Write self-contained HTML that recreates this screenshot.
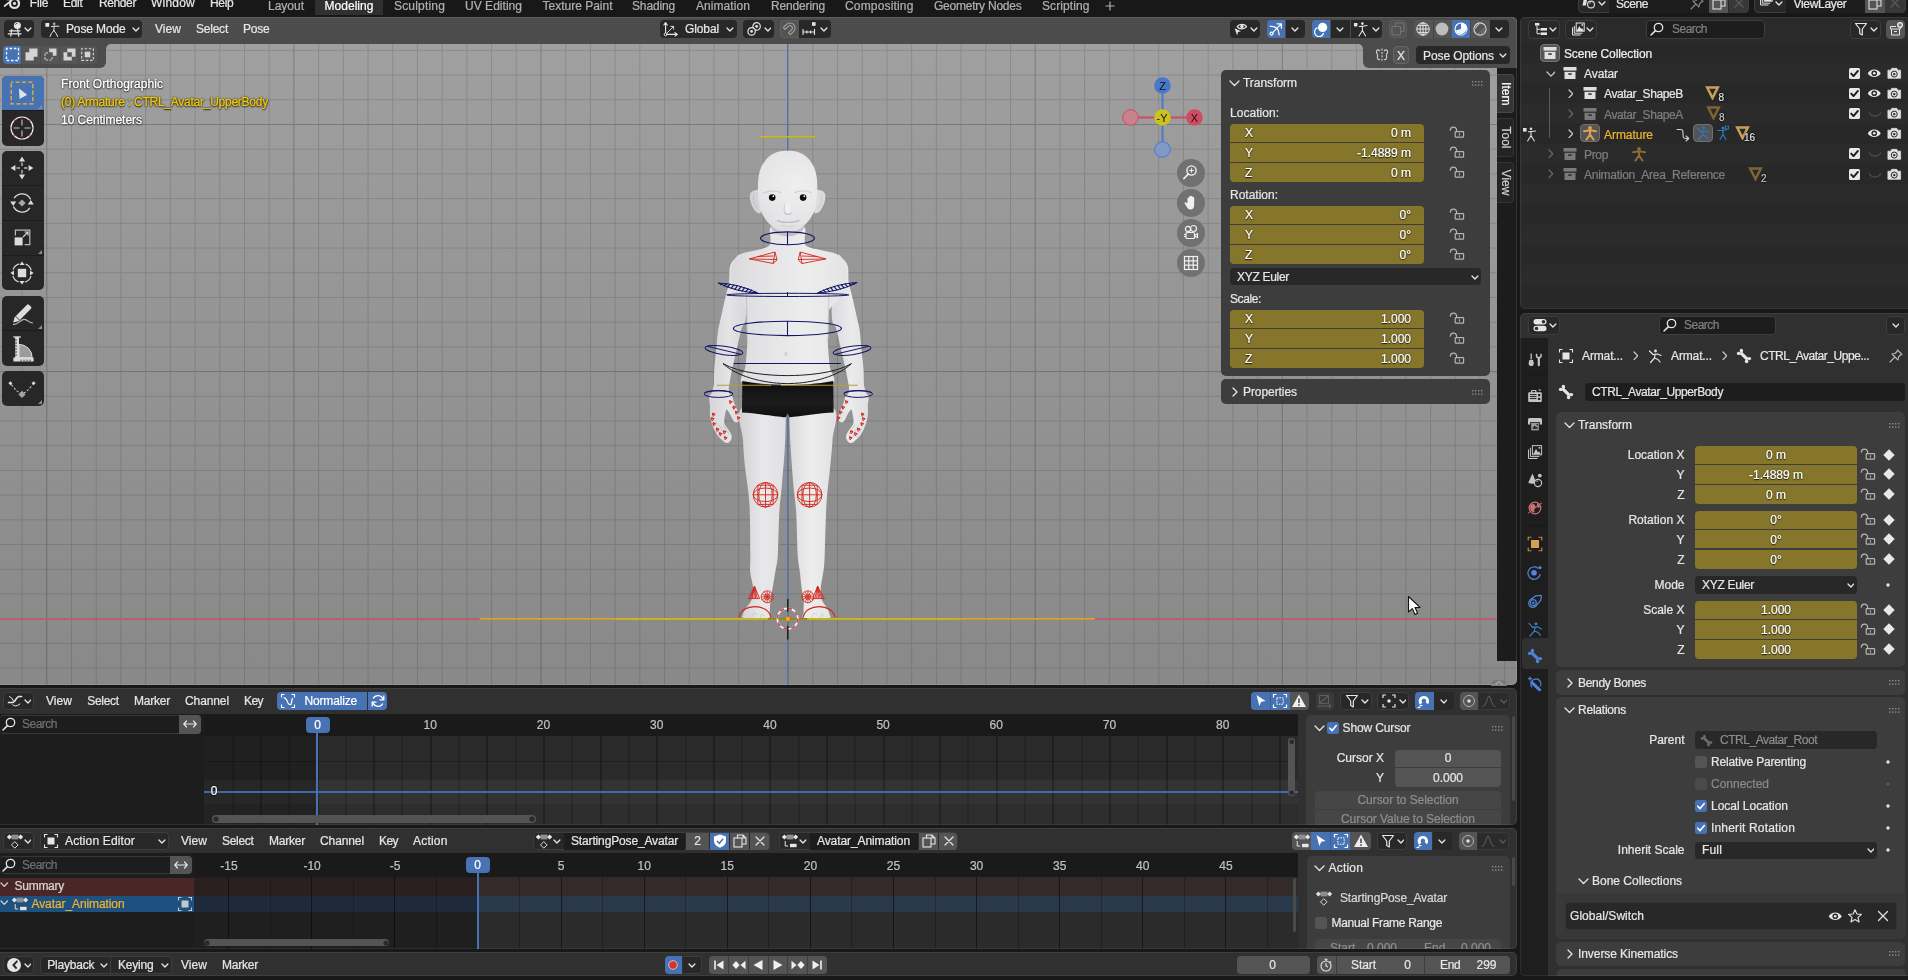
<!DOCTYPE html>
<html><head><meta charset="utf-8"><title>Blender</title>
<style>
html,body{margin:0;padding:0;background:#181818;}
body{width:1908px;height:980px;overflow:hidden;position:relative;font-family:"Liberation Sans", sans-serif;font-size:12px;color:#e6e6e6;}
#root{position:absolute;left:0;top:0;width:1908px;height:980px;overflow:hidden;will-change:transform;}
#root div,#root span,#root svg{position:absolute;white-space:pre;}
#root span{-webkit-text-stroke:0.22px currentColor;}
#root div{box-sizing:border-box;overflow:hidden;}
</style></head><body><div id="root">
<div style="left:0px;top:0px;width:1908px;height:17px;background:#181818;"></div>
<svg style="left:0px;top:0px;" width="24" height="12" viewBox="0 0 24 12"><circle cx="14.5" cy="3.4" r="4.5" fill="none" stroke="#e0e0e0" stroke-width="2.3"/><circle cx="14.5" cy="3.4" r="1.6" fill="#e0e0e0"/><path d="M4.6 6L10.4 1.4M7 -0.5H12" stroke="#e0e0e0" stroke-width="1.7" stroke-linecap="round"/></svg>
<span style="left:29.80px;top:-4.55px;line-height:16px;font-size:12px;color:#e6e6e6;letter-spacing:-0.211px;">File</span>
<span style="left:63.00px;top:-4.55px;line-height:16px;font-size:12px;color:#e6e6e6;letter-spacing:-0.297px;">Edit</span>
<span style="left:99.00px;top:-4.55px;line-height:16px;font-size:12px;color:#e6e6e6;letter-spacing:-0.393px;">Render</span>
<span style="left:151.00px;top:-4.55px;line-height:16px;font-size:12px;color:#e6e6e6;letter-spacing:0.219px;">Window</span>
<span style="left:210.00px;top:-4.55px;line-height:16px;font-size:12px;color:#e6e6e6;letter-spacing:-0.297px;">Help</span>
<div style="left:315px;top:0px;width:68px;height:14.5px;background:#303030;border-radius:0px 0px 0px 0px;"></div>
<span style="left:268.00px;top:-1.55px;line-height:16px;font-size:12px;color:#b0b0b0;letter-spacing:-0.005px;">Layout</span>
<span style="left:324.50px;top:-1.55px;line-height:16px;font-size:12px;color:#ffffff;letter-spacing:0.037px;">Modeling</span>
<span style="left:394.00px;top:-1.55px;line-height:16px;font-size:12px;color:#b0b0b0;letter-spacing:0.181px;">Sculpting</span>
<span style="left:465.00px;top:-1.55px;line-height:16px;font-size:12px;color:#b0b0b0;letter-spacing:0.030px;">UV Editing</span>
<span style="left:542.50px;top:-1.55px;line-height:16px;font-size:12px;color:#b0b0b0;">Texture Paint</span>
<span style="left:632.00px;top:-1.55px;line-height:16px;font-size:12px;color:#b0b0b0;letter-spacing:-0.150px;">Shading</span>
<span style="left:696.00px;top:-1.55px;line-height:16px;font-size:12px;color:#b0b0b0;letter-spacing:0.069px;">Animation</span>
<span style="left:771.00px;top:-1.55px;line-height:16px;font-size:12px;color:#b0b0b0;letter-spacing:-0.153px;">Rendering</span>
<span style="left:845.00px;top:-1.55px;line-height:16px;font-size:12px;color:#b0b0b0;letter-spacing:0.163px;">Compositing</span>
<span style="left:934.00px;top:-1.55px;line-height:16px;font-size:12px;color:#b0b0b0;letter-spacing:-0.229px;">Geometry Nodes</span>
<span style="left:1042.00px;top:-1.55px;line-height:16px;font-size:12px;color:#b0b0b0;letter-spacing:0.090px;">Scripting</span>
<svg style="left:1105px;top:1px;" width="10" height="10" viewBox="0 0 10 10"><path d="M5 0.5V9.5M0.5 5H9.5" stroke="#b0b0b0" stroke-width="1.2"/></svg>
<div style="left:1577.5px;top:-6px;width:171.3px;height:19px;background:#282828;border-radius:4px;border:1px solid #3d3d3d;"></div>
<div style="left:1608.5px;top:-6px;width:100.3px;height:18.5px;background:#1d1d1d;"></div>
<div style="left:1709.1px;top:-6px;width:19.4px;height:18.5px;background:#545454;"></div>
<div style="left:1729.1px;top:-6px;width:19.2px;height:18.5px;background:#383838;border-radius:0px 3px 3px 0px;"></div>
<svg style="left:1710.8px;top:-5.5px;" width="16" height="16" viewBox="0 0 16 16"><g fill="none" stroke="#e0e0e0" stroke-width="1.1"><rect x="2" y="5" width="8" height="9"/><path d="M5.5 5V2H11L14 5V11H10M11 2V5H14"/></g></svg>
<svg style="left:1730.8px;top:-5.5px;" width="16" height="16" viewBox="0 0 16 16"><path d="M4 4L12 12M12 4L4 12" stroke="#5c5c5c" stroke-width="1.2" stroke-linecap="round"/></svg>
<svg style="left:1598.05px;top:1.475px;" width="7.9" height="5.05" viewBox="0 0 7.9 5.05"><path d="M1 1 L3.95 4.05 L6.9 1" fill="none" stroke="#e6e6e6" stroke-width="1.3" stroke-linecap="round" stroke-linejoin="round"/></svg>
<span style="left:1616.00px;top:-4.05px;line-height:16px;font-size:12px;color:#e6e6e6;letter-spacing:-0.406px;">Scene</span>
<svg style="left:1581px;top:-4.4px;" width="16" height="16" viewBox="0 0 16 16"><path d="M3 2Q4 -1 6.5 1L5 9.5L1.5 9.5Z" fill="#e0e0e0"/><circle cx="10" cy="8.5" r="3.4" fill="none" stroke="#e0e0e0" stroke-width="1.1"/><path d="M8.5 7.2L10 6.6" stroke="#e0e0e0" stroke-width="0.9"/></svg>
<svg style="left:1689px;top:-5.5px;" width="16" height="16" viewBox="0 0 16 16"><path d="M9.5 2L14 6.5L12.5 7L10.5 9L10 12L4 6L7 5.5L9 3.5Z M6.5 9.5L2 14" fill="none" stroke="#8a8a8a" stroke-width="1.1" stroke-linejoin="round" stroke-linecap="round"/></svg>
<div style="left:1754.2px;top:-6px;width:151.4px;height:19px;background:#282828;border-radius:4px;border:1px solid #3d3d3d;"></div>
<div style="left:1785.5px;top:-6px;width:79.5px;height:18.5px;background:#1d1d1d;"></div>
<div style="left:1865.3px;top:-6px;width:19.4px;height:18.5px;background:#545454;"></div>
<div style="left:1885.3px;top:-6px;width:19.8px;height:18.5px;background:#383838;border-radius:0px 3px 3px 0px;"></div>
<svg style="left:1867px;top:-5.5px;" width="16" height="16" viewBox="0 0 16 16"><g fill="none" stroke="#e0e0e0" stroke-width="1.1"><rect x="2" y="5" width="8" height="9"/><path d="M5.5 5V2H11L14 5V11H10M11 2V5H14"/></g></svg>
<svg style="left:1887.3px;top:-5.5px;" width="16" height="16" viewBox="0 0 16 16"><path d="M4 4L12 12M12 4L4 12" stroke="#5c5c5c" stroke-width="1.2" stroke-linecap="round"/></svg>
<svg style="left:1775.05px;top:1.475px;" width="7.9" height="5.05" viewBox="0 0 7.9 5.05"><path d="M1 1 L3.95 4.05 L6.9 1" fill="none" stroke="#e6e6e6" stroke-width="1.3" stroke-linecap="round" stroke-linejoin="round"/></svg>
<span style="left:1793.50px;top:-4.05px;line-height:16px;font-size:12px;color:#e6e6e6;letter-spacing:-0.312px;">ViewLayer</span>
<svg style="left:1758px;top:-4.6px;" width="16" height="16" viewBox="0 0 16 16"><g fill="none" stroke="#e0e0e0" stroke-width="1"><path d="M2.5 2V10H10.5M4.3 0V8.2H12.3"/><rect x="6.2" y="-3" width="8" height="9.2"/></g><path d="M6.6 6L9.4 1L11 4L12 3L13.8 6Z" fill="#e0e0e0"/></svg>
<div style="left:0px;top:17px;width:1517px;height:668px;background:linear-gradient(#a1a1a1,#9a9a9a 25%,#939393 55%,#8c8c8c 85%,#898989);border-radius:0px 5px 5px 0px;"></div>
<svg style="left:0px;top:17px;border-radius:0 5px 5px 0;" width="1517" height="668" viewBox="0 0 1517 668"><defs><pattern id="g1" width="24.71" height="24.71" patternUnits="userSpaceOnUse" x="21.59" y="8.16"><path d="M0.5 0V24.71 M0 0.5H24.71" stroke="rgba(0,0,0,0.13)" stroke-width="1" fill="none"/></pattern><pattern id="g2" width="247.1" height="247.1" patternUnits="userSpaceOnUse" x="46.3" y="107"><path d="M0.5 0V247.1 M0 0.5H247.1" stroke="rgba(0,0,0,0.11)" stroke-width="1" fill="none"/></pattern></defs><rect width="1517" height="668" fill="url(#g1)"/><rect width="1517" height="668" fill="url(#g2)"/></svg>
<div style="left:0px;top:618.1px;width:1497px;height:1.5px;background:#b5606c;"></div>
<div style="left:787px;top:44px;width:1.25px;height:641px;background:#4b74ba;"></div>
<svg style="left:470px;top:125px;" width="640" height="525" viewBox="470 125 640 525"><defs><linearGradient id="sk" gradientUnits="userSpaceOnUse" x1="708" y1="0" x2="868" y2="0"><stop offset="0" stop-color="#d2d2d5"/><stop offset="0.3" stop-color="#e2e2e4"/><stop offset="0.62" stop-color="#ededee"/><stop offset="1" stop-color="#dfdfe1"/></linearGradient><linearGradient id="skL" gradientUnits="userSpaceOnUse" x1="710" y1="0" x2="742" y2="0"><stop offset="0" stop-color="#d6d6d9"/><stop offset="0.6" stop-color="#e4e4e6"/><stop offset="1" stop-color="#d9d9dc"/></linearGradient><linearGradient id="skR" gradientUnits="userSpaceOnUse" x1="834" y1="0" x2="868" y2="0"><stop offset="0" stop-color="#dcdcdf"/><stop offset="0.5" stop-color="#ebebec"/><stop offset="1" stop-color="#e0e0e2"/></linearGradient><linearGradient id="lgL" gradientUnits="userSpaceOnUse" x1="742" y1="0" x2="787" y2="0"><stop offset="0" stop-color="#d4d4d7"/><stop offset="0.45" stop-color="#e8e8ea"/><stop offset="1" stop-color="#e0e0e2"/></linearGradient><linearGradient id="lgR" gradientUnits="userSpaceOnUse" x1="788" y1="0" x2="834" y2="0"><stop offset="0" stop-color="#dadadd"/><stop offset="0.5" stop-color="#ededee"/><stop offset="1" stop-color="#e2e2e4"/></linearGradient><radialGradient id="hd" gradientUnits="userSpaceOnUse" cx="796" cy="186" r="62"><stop offset="0" stop-color="#efeff0"/><stop offset="0.6" stop-color="#e5e5e7"/><stop offset="1" stop-color="#d0d0d3"/></radialGradient><linearGradient id="sh" x1="0" y1="0" x2="0" y2="1"><stop offset="0" stop-color="#0e0e0e"/><stop offset="0.6" stop-color="#1c1c1c"/><stop offset="1" stop-color="#101010"/></linearGradient></defs><path d="M742.0 408.0 C734.8 413.3 742.5 430.2 743.0 440.0 C743.5 449.8 743.9 456.2 745.0 466.8 C746.1 477.4 748.5 488.9 749.4 503.6 C750.3 518.3 750.2 543.6 750.3 555.0 C750.4 566.4 749.7 566.4 750.2 572.0 C750.7 577.6 753.1 584.1 753.3 588.8 C753.5 593.5 752.8 596.6 751.5 600.0 C750.2 603.4 746.9 606.6 745.5 609.0 C744.1 611.4 743.2 613.0 743.0 614.5 C742.8 616.0 740.3 617.4 744.5 618.0 C748.7 618.6 763.8 618.8 768.0 618.0 C772.2 617.2 769.2 616.0 769.6 613.0 C770.0 610.0 770.0 604.0 770.5 600.0 C771.0 596.0 771.6 593.8 772.5 588.8 C773.4 583.8 774.7 575.6 775.6 570.0 C776.5 564.4 777.2 564.5 777.8 555.0 C778.4 545.5 778.6 524.5 779.3 512.8 C780.0 501.1 781.0 495.7 781.9 485.0 C782.8 474.3 784.1 459.8 784.8 448.5 C785.4 437.2 785.6 423.8 785.8 417.0 C786.0 410.2 793.3 409.5 786.0 408.0 C778.7 406.5 749.2 402.7 742.0 408.0Z" fill="url(#lgL)"/><path d="M789.4 408.0 C782.1 409.5 789.2 410.2 789.4 417.0 C789.6 423.8 790.0 437.2 790.7 448.5 C791.4 459.8 792.5 474.3 793.4 485.0 C794.3 495.7 795.5 501.1 796.2 512.8 C796.9 524.5 797.1 545.5 797.7 555.0 C798.3 564.5 798.9 564.4 799.6 570.0 C800.3 575.6 801.0 583.8 801.7 588.8 C802.4 593.8 803.3 596.1 803.6 600.0 C803.9 603.9 803.5 609.0 803.6 612.0 C803.8 615.0 800.4 617.0 804.5 618.0 C808.6 619.0 824.3 618.6 828.5 618.0 C832.7 617.4 829.9 616.2 829.6 614.5 C829.4 612.8 828.3 610.4 827.0 608.0 C825.7 605.6 823.0 603.2 822.0 600.0 C821.0 596.8 820.4 593.8 820.7 588.8 C821.0 583.8 822.9 575.6 823.6 570.0 C824.3 564.4 824.2 566.1 824.7 555.0 C825.2 543.9 825.6 518.3 826.5 503.6 C827.4 488.9 829.2 477.4 830.2 466.8 C831.2 456.2 832.0 449.8 832.5 440.0 C833.0 430.2 840.5 413.3 833.3 408.0 C826.1 402.7 796.7 406.5 789.4 408.0Z" fill="url(#lgR)"/><path d="M752 618C752 613 755 612 757 615M760.5 618C760.5 613 763.5 613 764 616.5" fill="none" stroke="#c4c4c8" stroke-width="0.8"/><path d="M812 618C812 613 815 612 817 615M820.5 618C820.5 613 823.5 613 824 616.5" fill="none" stroke="#c8c8cc" stroke-width="0.8"/><path d="M741.0 255.5 C739.3 252.7 737.1 256.4 735.3 258.2 C733.5 260.0 731.0 262.2 730.0 266.3 C729.0 270.4 729.8 277.2 729.0 282.6 C728.2 288.0 726.3 293.4 725.0 298.9 C723.7 304.3 722.5 310.1 721.4 315.3 C720.3 320.5 719.0 325.1 718.2 330.0 C717.4 334.9 717.4 338.0 716.7 344.5 C716.1 351.0 714.8 362.2 714.3 369.0 C713.8 375.8 714.3 380.3 713.8 385.0 C713.3 389.7 710.2 394.6 711.2 397.0 C712.2 399.4 717.0 399.5 720.0 399.5 C723.0 399.5 727.7 398.6 729.2 397.0 C730.7 395.4 728.8 392.0 728.8 390.0 C728.8 388.0 728.6 388.5 729.2 385.0 C729.8 381.5 730.8 375.8 732.2 369.0 C733.7 362.2 736.3 351.3 737.9 344.5 C739.5 337.7 740.5 331.9 741.8 328.0 C743.1 324.1 744.8 325.7 745.5 321.0 C746.2 316.3 746.2 307.7 746.2 300.0 C746.2 292.3 746.4 282.4 745.5 275.0 C744.6 267.6 742.7 258.3 741.0 255.5Z" fill="url(#skL)"/><path d="M710.8 394.0 C707.5 396.0 710.1 402.2 710.0 406.0 C709.9 409.8 709.6 413.3 710.2 417.0 C710.8 420.7 712.2 424.8 713.5 428.0 C714.8 431.2 716.3 433.8 718.0 436.0 C719.7 438.2 722.0 440.2 723.6 441.4 C725.2 442.5 726.6 443.2 727.9 442.9 C729.2 442.6 730.6 440.9 731.2 439.5 C731.8 438.1 732.0 436.4 731.3 434.5 C730.6 432.6 728.4 429.9 727.2 428.0 C726.0 426.1 724.7 425.2 724.3 423.0 C723.9 420.8 724.6 417.2 725.0 415.0 C725.4 412.8 725.8 409.7 726.6 409.5 C727.4 409.3 728.8 412.1 730.0 414.0 C731.2 415.9 732.4 419.6 733.6 421.0 C734.8 422.4 736.0 422.6 737.0 422.3 C738.0 422.1 739.0 421.1 739.3 419.5 C739.5 417.9 739.3 415.6 738.5 413.0 C737.7 410.4 736.0 407.2 734.5 404.0 C733.0 400.8 733.6 395.7 729.6 394.0 C725.6 392.3 714.1 392.0 710.8 394.0Z" fill="url(#skL)"/><path d="M836.8 255.5 C838.5 252.7 840.7 256.4 842.5 258.2 C844.3 260.0 846.8 262.2 847.8 266.3 C848.8 270.4 848.0 277.2 848.8 282.6 C849.6 288.0 851.5 293.4 852.8 298.9 C854.1 304.3 855.3 310.1 856.4 315.3 C857.5 320.5 858.8 325.1 859.6 330.0 C860.4 334.9 860.4 338.0 861.1 344.5 C861.7 351.0 863.0 362.2 863.5 369.0 C864.0 375.8 863.5 380.3 864.0 385.0 C864.5 389.7 867.6 394.6 866.6 397.0 C865.6 399.4 860.8 399.5 857.8 399.5 C854.8 399.5 850.1 398.6 848.6 397.0 C847.1 395.4 849.0 392.0 849.0 390.0 C849.0 388.0 849.2 388.5 848.6 385.0 C848.0 381.5 847.0 375.8 845.6 369.0 C844.1 362.2 841.5 351.3 839.9 344.5 C838.3 337.7 837.3 331.9 836.0 328.0 C834.7 324.1 833.0 325.7 832.3 321.0 C831.6 316.3 831.6 307.7 831.6 300.0 C831.6 292.3 831.4 282.4 832.3 275.0 C833.2 267.6 835.1 258.3 836.8 255.5Z" fill="url(#skR)"/><path d="M867.0 394.0 C870.3 396.0 867.7 402.2 867.8 406.0 C867.9 409.8 868.2 413.3 867.6 417.0 C867.0 420.7 865.6 424.8 864.3 428.0 C863.0 431.2 861.5 433.8 859.8 436.0 C858.1 438.2 855.8 440.2 854.2 441.4 C852.5 442.5 851.2 443.2 849.9 442.9 C848.6 442.6 847.2 440.9 846.6 439.5 C846.0 438.1 845.8 436.4 846.5 434.5 C847.2 432.6 849.4 429.9 850.6 428.0 C851.8 426.1 853.1 425.2 853.5 423.0 C853.9 420.8 853.2 417.2 852.8 415.0 C852.4 412.8 852.0 409.7 851.2 409.5 C850.4 409.3 849.0 412.1 847.8 414.0 C846.6 415.9 845.4 419.6 844.2 421.0 C843.0 422.4 841.8 422.6 840.8 422.3 C839.8 422.1 838.8 421.1 838.5 419.5 C838.2 417.9 838.5 415.6 839.3 413.0 C840.1 410.4 841.8 407.2 843.3 404.0 C844.8 400.8 844.2 395.7 848.2 394.0 C852.1 392.3 863.7 392.0 867.0 394.0Z" fill="url(#skR)"/><path d="M716 428L721.5 437M719.5 425.5L725.5 436.5M723 424.5L729 434.5" stroke="#bcbcc0" stroke-width="0.8" fill="none"/><path d="M861.8 428L856.3 437M858.3 425.5L852.3 436.5M854.8 424.5L848.8 434.5" stroke="#c0c0c4" stroke-width="0.8" fill="none"/><path d="M787.6 226.0 C782.1 226.0 773.9 224.7 771.0 227.0 C768.1 229.3 771.0 236.8 770.5 240.0 C770.0 243.2 770.6 244.8 768.0 246.5 C765.4 248.2 759.5 249.2 755.0 250.5 C750.5 251.8 744.6 252.0 741.0 254.0 C737.4 256.0 735.2 258.7 733.5 262.5 C731.8 266.3 730.2 271.1 731.0 277.0 C731.8 282.9 735.5 292.5 738.0 298.0 C740.5 303.5 744.5 305.5 746.0 310.0 C747.5 314.5 746.8 319.2 747.0 325.0 C747.2 330.8 747.5 337.7 747.3 344.5 C747.0 351.3 746.1 359.4 745.5 366.0 C744.9 372.6 736.6 380.3 743.6 384.0 C750.6 387.7 772.9 388.0 787.6 388.0 C802.3 388.0 824.6 387.7 831.6 384.0 C838.6 380.3 830.3 372.6 829.7 366.0 C829.1 359.4 828.2 351.3 827.9 344.5 C827.7 337.7 828.0 330.8 828.2 325.0 C828.4 319.2 827.3 314.5 829.2 310.0 C831.1 305.5 836.5 303.5 839.4 298.0 C842.3 292.5 845.7 282.9 846.4 277.0 C847.2 271.1 845.6 266.3 843.9 262.5 C842.2 258.7 840.0 256.0 836.4 254.0 C832.8 252.0 827.3 251.8 822.4 250.5 C817.5 249.2 810.2 248.2 807.2 246.5 C804.2 244.8 805.2 243.2 804.7 240.0 C804.2 236.8 807.1 229.3 804.2 227.0 C801.4 224.7 793.1 226.0 787.6 226.0Z" fill="url(#sk)"/><path d="M746 294C747 305 747 320 747.3 338" stroke="#c6c6ca" stroke-width="1.2" fill="none"/><path d="M829.2 294C828.2 305 828.2 320 827.9 338" stroke="#d0d0d3" stroke-width="1.2" fill="none"/><ellipse cx="786" cy="354" rx="1.6" ry="2" fill="#cfcfd2"/><path d="M742.3 381C758 384 775 385 787.6 385C800 385 817 384 833.2 381L833.6 412.6C820 413 800 416.5 789.5 417.3L787.6 413.5L785.7 417.3C775 416.5 755 413 742 412.6Z" fill="url(#sh)"/><path d="M759.0 191.5 C757.8 188.1 755.0 190.3 753.5 190.8 C752.0 191.3 750.5 192.7 750.0 194.5 C749.5 196.3 749.9 199.2 750.5 201.5 C751.1 203.8 752.3 206.6 753.5 208.5 C754.7 210.4 756.2 212.4 757.5 212.8 C758.8 213.2 760.8 214.6 761.0 211.0 C761.2 207.4 760.2 194.9 759.0 191.5Z" fill="#d3d3d6"/><path d="M816.2 191.5 C817.5 188.1 820.2 190.3 821.7 190.8 C823.2 191.3 824.7 192.7 825.2 194.5 C825.7 196.3 825.3 199.2 824.7 201.5 C824.1 203.8 822.9 206.6 821.7 208.5 C820.5 210.4 819.0 212.4 817.7 212.8 C816.5 213.2 814.5 214.6 814.2 211.0 C814.0 207.4 815.0 194.9 816.2 191.5Z" fill="#dcdcde"/><path d="M753.5 194.5C752.5 200 754.5 205 757.5 209" stroke="#bebec2" stroke-width="0.9" fill="none"/><path d="M821.7 194.5C822.7 200 820.7 205 817.7 209" stroke="#c8c8cc" stroke-width="0.9" fill="none"/><path d="M770.8 226C773 240 802 240 804.4 226Z" fill="#c2c2c6"/><path d="M787.6 150.7 C784.4 150.7 781.2 150.8 778.0 151.8 C774.8 152.9 771.2 154.6 768.5 157.0 C765.8 159.4 763.2 163.0 761.5 166.5 C759.8 170.0 759.0 173.8 758.4 178.0 C757.8 182.2 757.9 187.7 758.0 192.0 C758.1 196.3 758.3 200.4 759.0 204.0 C759.7 207.6 760.4 210.3 762.0 213.5 C763.6 216.7 765.9 220.2 768.5 223.0 C771.1 225.8 774.3 228.6 777.5 230.2 C780.7 231.8 784.2 232.6 787.6 232.6 C791.0 232.6 794.5 231.8 797.7 230.2 C800.9 228.6 804.1 225.8 806.7 223.0 C809.3 220.2 811.6 216.7 813.2 213.5 C814.8 210.3 815.5 207.6 816.2 204.0 C816.9 200.4 817.1 196.3 817.2 192.0 C817.3 187.7 817.4 182.2 816.8 178.0 C816.2 173.8 815.4 170.0 813.7 166.5 C812.0 163.0 809.5 159.4 806.7 157.0 C804.0 154.6 800.4 152.9 797.2 151.8 C794.0 150.8 790.8 150.7 787.6 150.7Z" fill="url(#hd)"/><path d="M763.5 193C768 190.6 776 190.6 781 192.6" stroke="#cfcfd3" stroke-width="1.3" fill="none" stroke-linecap="round"/><path d="M794.5 192.6C800 190.6 807 190.6 811.5 193" stroke="#d3d3d6" stroke-width="1.3" fill="none" stroke-linecap="round"/><circle cx="772.2" cy="197.6" r="3.3" fill="#0c0c0c"/><circle cx="803.1" cy="197.6" r="3.3" fill="#0c0c0c"/><circle cx="773.3" cy="196.2" r="0.9" fill="#f4f4f4"/><circle cx="804.3" cy="196.2" r="0.9" fill="#f4f4f4"/><ellipse cx="788.2" cy="208.5" rx="2.6" ry="5" fill="#f1f1f2" opacity="0.9"/><path d="M784.6 204C784 208 783.6 211 784.8 212.6" stroke="#d3d3d7" stroke-width="1.2" fill="none" stroke-linecap="round"/><path d="M784.6 213.2C786.4 214.8 789.6 214.8 791.2 213.2" stroke="#c4c4c8" stroke-width="1.3" fill="none" stroke-linecap="round"/><path d="M777.5 220.6C782 223 794 223 799 220.4" stroke="#bdbdc1" stroke-width="1.2" fill="none" stroke-linecap="round"/><path d="M781 225.5C785 226.8 791 226.8 795 225.5" stroke="#d2d2d5" stroke-width="1" fill="none" stroke-linecap="round"/><path d="M479.6 618.9H1094.8" stroke="#d2a630" stroke-width="1.7"/><path d="M616 618.9H959" stroke="#c4bc14" stroke-width="1.7"/><path d="M768 618.9H807" stroke="#8f8424" stroke-width="1.7"/><path d="M787.6 414V640" stroke="#4b74ba" stroke-width="1.25"/><circle cx="787.6" cy="618.7" r="10.3" fill="none" stroke="#f2f2f2" stroke-width="1.6"/><circle cx="787.6" cy="618.7" r="10.3" fill="none" stroke="#d8404a" stroke-width="1.6" stroke-dasharray="4.05 4.05"/><path d="M787.8 599V611.5M787.8 626V639.5" stroke="#111" stroke-width="1.3"/><circle cx="787.8" cy="618.8" r="2.6" fill="#f4a61c" stroke="#a06a10" stroke-width="0.6"/><path d="M760 136.7H815" stroke="#c9ba0c" stroke-width="1.4"/><ellipse cx="787.5" cy="238.3" rx="27" ry="6.4" fill="none" stroke="#151566" stroke-width="1.1"/><path d="M787.5 231.9V244.7" stroke="#151566" stroke-width="1.1"/><g fill="none" stroke="#d02418" stroke-width="0.9"><path d="M749.4 258.9L775 252L773.2 263.5Z M749.4 258.9L776.5 259.5 M757 256.5L773.5 256 M775 252L777 260L773.2 263.5"/><path d="M825.8 258.9L800.2 252L802 263.5Z M825.8 258.9L798.7 259.5 M818.2 256.5L801.7 256 M800.2 252L798.2 260L802 263.5"/></g><path d="M718.0 283.0 Q736.9 292.1 757.8 293.0 Q738.9 283.9 718.0 283.0Z" fill="none" stroke="#151566" stroke-width="1"/><path d="M720.3 284.6L723.0 283.2" stroke="#151566" stroke-width="1.2"/><path d="M723.7 286.2L726.7 283.5" stroke="#151566" stroke-width="1.2"/><path d="M727.2 287.5L730.5 283.9" stroke="#151566" stroke-width="1.2"/><path d="M730.8 288.7L734.2 284.6" stroke="#151566" stroke-width="1.2"/><path d="M734.4 289.8L737.8 285.3" stroke="#151566" stroke-width="1.2"/><path d="M738.0 290.7L741.4 286.2" stroke="#151566" stroke-width="1.2"/><path d="M741.6 291.4L745.0 287.3" stroke="#151566" stroke-width="1.2"/><path d="M745.3 292.1L748.6 288.5" stroke="#151566" stroke-width="1.2"/><path d="M749.1 292.5L752.1 289.8" stroke="#151566" stroke-width="1.2"/><path d="M752.8 292.8L755.5 291.4" stroke="#151566" stroke-width="1.2"/><path d="M857.2 282.5 Q838.4 291.8 817.4 293.0 Q836.2 283.7 857.2 282.5Z" fill="none" stroke="#151566" stroke-width="1"/><path d="M854.9 284.2L852.2 282.7" stroke="#151566" stroke-width="1.2"/><path d="M851.5 285.7L848.5 283.1" stroke="#151566" stroke-width="1.2"/><path d="M848.0 287.1L844.7 283.6" stroke="#151566" stroke-width="1.2"/><path d="M844.4 288.4L841.0 284.3" stroke="#151566" stroke-width="1.2"/><path d="M840.9 289.5L837.4 285.1" stroke="#151566" stroke-width="1.2"/><path d="M837.2 290.4L833.7 286.0" stroke="#151566" stroke-width="1.2"/><path d="M833.6 291.2L830.2 287.1" stroke="#151566" stroke-width="1.2"/><path d="M829.9 291.9L826.6 288.4" stroke="#151566" stroke-width="1.2"/><path d="M826.1 292.4L823.1 289.8" stroke="#151566" stroke-width="1.2"/><path d="M822.4 292.8L819.7 291.3" stroke="#151566" stroke-width="1.2"/><ellipse cx="787.8" cy="294.9" rx="61" ry="1.6" fill="none" stroke="#151566" stroke-width="1"/><path d="M787.5 292V296.5" stroke="#151566" stroke-width="1"/><ellipse cx="787.4" cy="328.4" rx="54" ry="7.2" fill="none" stroke="#151566" stroke-width="1.1"/><path d="M787.5 321.2V335.6" stroke="#151566" stroke-width="1.1"/><g fill="none" stroke="#151566" stroke-width="1"><ellipse cx="724" cy="350.4" rx="19" ry="4.3" transform="rotate(8 724 350.4)"/><path d="M708 346.5L742 354.5"/><ellipse cx="852" cy="350.4" rx="19" ry="4.3" transform="rotate(-8 852 350.4)"/><path d="M868 346.5L834 354.5"/></g><path d="M733.7 363.5H840.8" stroke="#151566" stroke-width="1"/><path d="M723 363.6C740 379 770 383.6 787.5 383.6C805 383.6 835 379 851.5 363.6C835 373.5 805 375.6 787.5 375.6C770 375.6 740 373.5 723 363.6Z" fill="none" stroke="#1e1e24" stroke-width="1"/><path d="M716.8 385.3H857.8" stroke="#b89c3c" stroke-width="1.1"/><path d="M771 385.3H781" stroke="#2a2a2a" stroke-width="1.3"/><g fill="none" stroke="#151566" stroke-width="1"><ellipse cx="718.5" cy="393.9" rx="14.4" ry="3.5"/><path d="M704.5 392.6C712 390.2 726 390.4 732.5 392.8"/><ellipse cx="858.2" cy="393.9" rx="14.4" ry="3.5"/><path d="M844 392.8C851 390.4 865 390.2 872 392.6"/></g><path d="M729.5 400.5l2.6 1.2l-2 2.2zM729.0 402.0l3 -0.6" fill="none" stroke="#d02418" stroke-width="0.9"/><path d="M733.0 406.0l2.6 1.2l-2 2.2zM732.5 407.5l3 -0.6" fill="none" stroke="#d02418" stroke-width="0.9"/><path d="M735.5 411.0l2.6 1.2l-2 2.2zM735.0 412.5l3 -0.6" fill="none" stroke="#d02418" stroke-width="0.9"/><path d="M737.5 416.5l2.6 1.2l-2 2.2zM737.0 418.0l3 -0.6" fill="none" stroke="#d02418" stroke-width="0.9"/><path d="M711.5 417.5l2.6 1.2l-2 2.2zM711.0 419.0l3 -0.6" fill="none" stroke="#d02418" stroke-width="0.9"/><path d="M713.0 422.5l2.6 1.2l-2 2.2zM712.5 424.0l3 -0.6" fill="none" stroke="#d02418" stroke-width="0.9"/><path d="M716.5 428.0l2.6 1.2l-2 2.2zM716.0 429.5l3 -0.6" fill="none" stroke="#d02418" stroke-width="0.9"/><path d="M719.5 432.5l2.6 1.2l-2 2.2zM719.0 434.0l3 -0.6" fill="none" stroke="#d02418" stroke-width="0.9"/><path d="M723.5 430.5l2.6 1.2l-2 2.2zM723.0 432.0l3 -0.6" fill="none" stroke="#d02418" stroke-width="0.9"/><path d="M724.5 436.5l2.6 1.2l-2 2.2zM724.0 438.0l3 -0.6" fill="none" stroke="#d02418" stroke-width="0.9"/><path d="M712.5 413.0l2.6 1.2l-2 2.2zM712.0 414.5l3 -0.6" fill="none" stroke="#d02418" stroke-width="0.9"/><path d="M845.5 400.5l2.6 1.2l-2 2.2zM845.0 402.0l3 -0.6" fill="none" stroke="#d02418" stroke-width="0.9"/><path d="M842.0 406.0l2.6 1.2l-2 2.2zM841.5 407.5l3 -0.6" fill="none" stroke="#d02418" stroke-width="0.9"/><path d="M839.5 411.0l2.6 1.2l-2 2.2zM839.0 412.5l3 -0.6" fill="none" stroke="#d02418" stroke-width="0.9"/><path d="M837.5 416.5l2.6 1.2l-2 2.2zM837.0 418.0l3 -0.6" fill="none" stroke="#d02418" stroke-width="0.9"/><path d="M862.5 417.5l2.6 1.2l-2 2.2zM862.0 419.0l3 -0.6" fill="none" stroke="#d02418" stroke-width="0.9"/><path d="M861.0 422.5l2.6 1.2l-2 2.2zM860.5 424.0l3 -0.6" fill="none" stroke="#d02418" stroke-width="0.9"/><path d="M857.5 428.0l2.6 1.2l-2 2.2zM857.0 429.5l3 -0.6" fill="none" stroke="#d02418" stroke-width="0.9"/><path d="M854.5 432.5l2.6 1.2l-2 2.2zM854.0 434.0l3 -0.6" fill="none" stroke="#d02418" stroke-width="0.9"/><path d="M850.5 430.5l2.6 1.2l-2 2.2zM850.0 432.0l3 -0.6" fill="none" stroke="#d02418" stroke-width="0.9"/><path d="M849.5 436.5l2.6 1.2l-2 2.2zM849.0 438.0l3 -0.6" fill="none" stroke="#d02418" stroke-width="0.9"/><path d="M861.5 413.0l2.6 1.2l-2 2.2zM861.0 414.5l3 -0.6" fill="none" stroke="#d02418" stroke-width="0.9"/><g fill="none" stroke="#d02418" stroke-width="0.9"><circle cx="765.5" cy="494.8" r="12.3"/><ellipse cx="765.5" cy="494.8" rx="6.765" ry="12.3"/><ellipse cx="765.5" cy="494.8" rx="12.3" ry="6.765"/><path d="M765.5 482.5V507.1M753.2 494.8H777.8"/><path d="M757.874 485.206h15.252v19.188h-15.252z"/></g><g fill="none" stroke="#d02418" stroke-width="0.9"><circle cx="809.6" cy="494.8" r="12.3"/><ellipse cx="809.6" cy="494.8" rx="6.765" ry="12.3"/><ellipse cx="809.6" cy="494.8" rx="12.3" ry="6.765"/><path d="M809.6 482.5V507.1M797.3 494.8H821.9"/><path d="M801.974 485.206h15.252v19.188h-15.252z"/></g><g fill="none" stroke="#d02418" stroke-width="0.8"><circle cx="767.2" cy="596.8" r="6"/><circle cx="767.2" cy="596.8" r="2.7"/><path d="M761.2 596.8L773.2 596.8"/><path d="M762.0 593.8L772.4 599.8"/><path d="M764.2 591.6L770.2 602.0"/><path d="M767.2 590.8L767.2 602.8"/><path d="M770.2 591.6L764.2 602.0"/><path d="M772.4 593.8L762.0 599.8"/></g><g fill="none" stroke="#d02418" stroke-width="0.8"><circle cx="807.9" cy="596.8" r="6"/><circle cx="807.9" cy="596.8" r="2.7"/><path d="M801.9 596.8L813.9 596.8"/><path d="M802.7 593.8L813.1 599.8"/><path d="M804.9 591.6L810.9 602.0"/><path d="M807.9 590.8L807.9 602.8"/><path d="M810.9 591.6L804.9 602.0"/><path d="M813.1 593.8L802.7 599.8"/></g><g fill="none" stroke="#d02418" stroke-width="0.9"><path d="M754.5 586.3L748.4 598.6L759.6 598.6Z"/><path d="M754.5 586.3L750.64 598.6"/><path d="M754.5 586.3L752.32 598.6"/><path d="M754.5 586.3L754 598.6"/><path d="M754.5 586.3L755.68 598.6"/><path d="M754.5 586.3L757.36 598.6"/></g><g fill="none" stroke="#d02418" stroke-width="0.9"><path d="M817.6 586.3L812.6 598.6L824.2 598.6Z"/><path d="M817.6 586.3L814.92 598.6"/><path d="M817.6 586.3L816.66 598.6"/><path d="M817.6 586.3L818.4 598.6"/><path d="M817.6 586.3L820.14 598.6"/><path d="M817.6 586.3L821.88 598.6"/></g><path d="M739.2 617.3C741 603 768.5 603 770.8 617.3" fill="none" stroke="#d02418" stroke-width="1.1"/><path d="M803.2 617.3C805.5 603 833 603 834.8 617.3" fill="none" stroke="#d02418" stroke-width="1.1"/></svg>
<div style="left:0px;top:17px;width:1517px;height:27px;background:#4c4c4c;border-radius:0px 5px 0px 0px;"></div>
<div style="left:0px;top:44px;width:105.7px;height:23.5px;background:#4c4c4c;border-radius:0px 0px 6px 0px;"></div>
<svg style="left:105.7px;top:44px;" width="5" height="5" viewBox="0 0 5 5"><path d="M0 0H5A5 5 0 0 0 0 5Z" fill="#4c4c4c"/></svg>
<svg style="left:1358px;top:44px;" width="5" height="5" viewBox="0 0 5 5"><path d="M5 0H0A5 5 0 0 1 5 5Z" fill="#4c4c4c"/></svg>
<div style="left:1363px;top:44px;width:154px;height:24px;background:#4c4c4c;border-radius:0px 0px 0px 6px;"></div>
<div style="left:3.9px;top:20.3px;width:30.3px;height:17.4px;background:#282828;border-radius:4px;"></div>
<svg style="left:6.6px;top:21.2px;" width="16" height="16" viewBox="0 0 16 16"><g stroke="#e6e6e6" stroke-width="1.15" fill="none"><path d="M2 9.9H13.4M0.8 12.9H14.4M4.8 8.2L3.6 15.6M10.6 8.2L11.8 15.6"/></g><circle cx="10.4" cy="4.6" r="3.5" fill="#e6e6e6"/><path d="M8.4 3.8A2.3 2.3 0 0 1 10.6 2.2" stroke="#282828" stroke-width="0.8" fill="none"/></svg>
<svg style="left:24.05px;top:27.475px;" width="7.9" height="5.05" viewBox="0 0 7.9 5.05"><path d="M1 1 L3.95 4.05 L6.9 1" fill="none" stroke="#e6e6e6" stroke-width="1.3" stroke-linecap="round" stroke-linejoin="round"/></svg>
<div style="left:40.9px;top:20.3px;width:101px;height:17.4px;background:#282828;border-radius:4px;"></div>
<svg style="left:44px;top:20.5px;" width="17" height="17" viewBox="0 0 17 17"><rect x="1.4" y="2" width="3.8" height="3.8" fill="#e6e6e6"/><g stroke="#e6e6e6" stroke-width="1" fill="none" stroke-linecap="round"><circle cx="10.2" cy="2.8" r="1.3" fill="#b0b0b0" stroke="none"/><path d="M7.6 5.6L10.2 5.2L15 5.2M10.2 5.2L9.8 9.6M9.8 9.6Q7 12 6 15.5M9.8 9.6Q12.6 12 13.6 15.5"/></g></svg>
<span style="left:66.00px;top:21.45px;line-height:16px;font-size:12px;color:#e6e6e6;letter-spacing:-0.134px;">Pose Mode</span>
<svg style="left:132.05px;top:27.475px;" width="7.9" height="5.05" viewBox="0 0 7.9 5.05"><path d="M1 1 L3.95 4.05 L6.9 1" fill="none" stroke="#e6e6e6" stroke-width="1.3" stroke-linecap="round" stroke-linejoin="round"/></svg>
<span style="left:155.00px;top:21.45px;line-height:16px;font-size:12px;color:#e6e6e6;letter-spacing:0.051px;">View</span>
<span style="left:196.00px;top:21.45px;line-height:16px;font-size:12px;color:#e6e6e6;letter-spacing:-0.227px;">Select</span>
<span style="left:243.00px;top:21.45px;line-height:16px;font-size:12px;color:#e6e6e6;letter-spacing:-0.215px;">Pose</span>
<div style="left:659.5px;top:20px;width:77px;height:18px;background:#282828;border-radius:4px;"></div>
<svg style="left:663.3px;top:21.2px;" width="16" height="16" viewBox="0 0 16 16"><g stroke="#e6e6e6" fill="none" stroke-linecap="round" stroke-linejoin="round"><path d="M2.6 11.6V2M0.9 4L2.6 1.6L4.3 4M4.2 13.4H14M12 11.7L14.4 13.4L12 15.1" stroke-width="1.15"/><path d="M3.8 12.2L10.4 5.6M7.8 5.4H10.6V8.2" stroke-width="0.9"/><circle cx="2.6" cy="13.4" r="1.4" stroke-width="1"/></g></svg>
<span style="left:685.00px;top:21.45px;line-height:16px;font-size:12px;color:#e6e6e6;letter-spacing:-0.115px;">Global</span>
<svg style="left:726.05px;top:27.475px;" width="7.9" height="5.05" viewBox="0 0 7.9 5.05"><path d="M1 1 L3.95 4.05 L6.9 1" fill="none" stroke="#e6e6e6" stroke-width="1.3" stroke-linecap="round" stroke-linejoin="round"/></svg>
<div style="left:742.5px;top:20px;width:31px;height:18px;background:#282828;border-radius:4px;"></div>
<svg style="left:746px;top:21.3px;" width="16" height="16" viewBox="0 0 16 16"><g stroke="#e6e6e6" stroke-width="1.2" fill="none"><circle cx="10.6" cy="5.4" r="3.7"/><circle cx="5.6" cy="10.4" r="3.7" fill="#282828"/></g><circle cx="5.6" cy="10.4" r="1.4" fill="#e6e6e6"/><circle cx="10.6" cy="5.4" r="1.4" fill="#e6e6e6"/></svg>
<svg style="left:763.55px;top:27.475px;" width="7.9" height="5.05" viewBox="0 0 7.9 5.05"><path d="M1 1 L3.95 4.05 L6.9 1" fill="none" stroke="#e6e6e6" stroke-width="1.3" stroke-linecap="round" stroke-linejoin="round"/></svg>
<div style="left:780px;top:20px;width:18.5px;height:18px;background:#545454;border-radius:4px 0px 0px 4px;border:1px solid #5e5e5e;border-right:none;"></div>
<svg style="left:781.3px;top:21px;" width="16" height="16" viewBox="0 0 16 16"><g transform="translate(9 7) rotate(45)"><path d="M-5 4.5V0A5 5 0 0 1 5 0V4.5H2.4V0A2.4 2.4 0 0 0 -2.4 0V4.5Z" fill="none" stroke="#a4a4a4" stroke-width="1.05" stroke-linejoin="round"/></g></svg>
<div style="left:798.5px;top:20px;width:32px;height:18px;background:#282828;border-radius:0px 4px 4px 0px;"></div>
<svg style="left:800.5px;top:21.3px;" width="16" height="16" viewBox="0 0 16 16"><g stroke="#e6e6e6" stroke-width="1.1" fill="none"><path d="M2 11H13.5M2 8V14M5.8 9.5V12.5M9.6 9.5V12.5M13.5 8V14"/></g><rect x="11" y="1.2" width="3.6" height="3.6" fill="#e6e6e6"/></svg>
<svg style="left:820.05px;top:27.475px;" width="7.9" height="5.05" viewBox="0 0 7.9 5.05"><path d="M1 1 L3.95 4.05 L6.9 1" fill="none" stroke="#e6e6e6" stroke-width="1.3" stroke-linecap="round" stroke-linejoin="round"/></svg>
<div style="left:1229.7px;top:20px;width:30.3px;height:18px;background:#282828;border-radius:4px;"></div>
<svg style="left:1233px;top:21px;" width="16" height="16" viewBox="0 0 16 16"><path d="M4.2 5.6C6 2.6 11.4 2.6 13.6 5.6C11.4 8.6 6 8.6 4.2 5.6Z" fill="none" stroke="#e6e6e6" stroke-width="1.2"/><circle cx="8.9" cy="5.5" r="1.7" fill="#e6e6e6"/><path d="M1.6 7.2L8 10.2L5 11L4.2 14.6Z" fill="#e6e6e6"/></svg>
<svg style="left:1250.05px;top:27.475px;" width="7.9" height="5.05" viewBox="0 0 7.9 5.05"><path d="M1 1 L3.95 4.05 L6.9 1" fill="none" stroke="#e6e6e6" stroke-width="1.3" stroke-linecap="round" stroke-linejoin="round"/></svg>
<div style="left:1267.2px;top:20px;width:18px;height:18px;background:#4772b3;border-radius:4px 0px 0px 4px;"></div>
<svg style="left:1268.2px;top:21px;" width="16" height="16" viewBox="0 0 16 16"><g stroke="#fff" stroke-width="1.2" fill="none" stroke-linecap="round" stroke-linejoin="round"><path d="M4.6 11.6L13 3.2M9 2.8H13.4V7.2"/><path d="M2.2 5.4C7.4 4.6 11.6 8.4 11 14"/><circle cx="3.6" cy="12.6" r="1.5"/></g></svg>
<div style="left:1285.7px;top:20px;width:19.3px;height:18px;background:#282828;border-radius:0px 4px 4px 0px;"></div>
<svg style="left:1291.05px;top:27.475px;" width="7.9" height="5.05" viewBox="0 0 7.9 5.05"><path d="M1 1 L3.95 4.05 L6.9 1" fill="none" stroke="#e6e6e6" stroke-width="1.3" stroke-linecap="round" stroke-linejoin="round"/></svg>
<div style="left:1312px;top:20px;width:18px;height:18px;background:#4772b3;border-radius:4px 0px 0px 4px;"></div>
<svg style="left:1313px;top:21px;" width="16" height="16" viewBox="0 0 16 16"><circle cx="9.6" cy="6.4" r="4.6" fill="#fff"/><path d="M4.6 6.6A4.6 4.6 0 1 0 10.6 12" fill="none" stroke="#fff" stroke-width="1.2"/></svg>
<div style="left:1330.5px;top:20px;width:19.5px;height:18px;background:#282828;"></div>
<svg style="left:1336.05px;top:27.475px;" width="7.9" height="5.05" viewBox="0 0 7.9 5.05"><path d="M1 1 L3.95 4.05 L6.9 1" fill="none" stroke="#e6e6e6" stroke-width="1.3" stroke-linecap="round" stroke-linejoin="round"/></svg>
<div style="left:1350.6px;top:20px;width:31.4px;height:18px;background:#282828;border-radius:0px 4px 4px 0px;"></div>
<svg style="left:1353px;top:21px;" width="16" height="16" viewBox="0 0 16 16"><rect x="1" y="2" width="3.4" height="3.4" fill="#e6e6e6"/><g stroke="#e6e6e6" stroke-width="1.05" fill="none" stroke-linecap="round"><circle cx="9.4" cy="2.6" r="1.3" fill="#e6e6e6" stroke="none"/><path d="M6.4 5.6L9.4 5.2L14 4.6M9.4 5.2V9.4M9.4 9.4L6 15M9.4 9.4L12.6 15"/></g></svg>
<svg style="left:1372.05px;top:27.475px;" width="7.9" height="5.05" viewBox="0 0 7.9 5.05"><path d="M1 1 L3.95 4.05 L6.9 1" fill="none" stroke="#e6e6e6" stroke-width="1.3" stroke-linecap="round" stroke-linejoin="round"/></svg>
<div style="left:1389px;top:20px;width:18.2px;height:18px;background:#535353;border-radius:4px;border:1px solid #5c5c5c;"></div>
<svg style="left:1390px;top:21px;" width="16" height="16" viewBox="0 0 16 16"><g stroke="#747474" stroke-width="1.05" fill="none"><rect x="2" y="5.5" width="8.5" height="8.5" rx="1"/><path d="M5.5 5.5V3Q5.5 2 6.5 2H13Q14 2 14 3V9.5Q14 10.5 13 10.5H10.5"/></g></svg>
<div style="left:1414px;top:20px;width:75.5px;height:18px;background:#555555;border-radius:4px 0px 0px 4px;"></div>
<div style="left:1489.5px;top:20px;width:19.5px;height:18px;background:#282828;border-radius:0px 4px 4px 0px;"></div>
<div style="left:1452px;top:20px;width:18.4px;height:18px;background:#4772b3;"></div>
<div style="left:1432.6px;top:20px;width:0.8px;height:18px;background:#444;"></div>
<div style="left:1470.4px;top:20px;width:0.8px;height:18px;background:#444;"></div>
<svg style="left:1415.3px;top:21px;" width="16" height="16" viewBox="0 0 16 16"><g stroke="#e6e6e6" stroke-width="1" fill="none"><circle cx="8" cy="8" r="6.2"/><path d="M8 1.8V14.2M1.8 8H14.2M2.9 4.6H13.1M2.9 11.4H13.1"/><ellipse cx="8" cy="8" rx="3" ry="6.2"/></g></svg>
<svg style="left:1434.3px;top:21px;" width="16" height="16" viewBox="0 0 16 16"><circle cx="8" cy="8" r="6.4" fill="#bdbdbd"/></svg>
<svg style="left:1453.2px;top:21px;" width="16" height="16" viewBox="0 0 16 16"><circle cx="8" cy="8" r="6" fill="none" stroke="#fff" stroke-width="1.1"/><path d="M8 2A6 6 0 0 1 14 8H8Z" fill="#fff"/><path d="M2.6 9.5A6 6 0 0 0 14 8L8 8Z" fill="#fff" opacity="0.95"/><path d="M9 14L14 9.5M11 13.6L13.6 11" stroke="#4772b3" stroke-width="0.7"/></svg>
<svg style="left:1471.8px;top:21px;" width="16" height="16" viewBox="0 0 16 16"><circle cx="8" cy="8" r="6.1" fill="none" stroke="#d8d8d8" stroke-width="1.1"/><path d="M3.6 7.6A4.6 4.6 0 0 1 7.2 3.4" stroke="#d8d8d8" stroke-width="1" fill="none"/><path d="M6 13.4L13.4 6M8.4 13.8L13.8 8.4M10.8 13.2L13.2 10.8" stroke="#9a9a9a" stroke-width="0.7"/></svg>
<svg style="left:1495.35px;top:27.475px;" width="7.9" height="5.05" viewBox="0 0 7.9 5.05"><path d="M1 1 L3.95 4.05 L6.9 1" fill="none" stroke="#e6e6e6" stroke-width="1.3" stroke-linecap="round" stroke-linejoin="round"/></svg>
<div style="left:3.1px;top:45.8px;width:18.1px;height:18.1px;background:#4772b3;border-radius:4px 0px 0px 4px;"></div>
<div style="left:22.05px;top:45.8px;width:18.1px;height:18.1px;background:#555555;"></div>
<div style="left:41px;top:45.8px;width:18.1px;height:18.1px;background:#555555;"></div>
<div style="left:59.95px;top:45.8px;width:18.1px;height:18.1px;background:#555555;"></div>
<div style="left:78.9px;top:45.8px;width:18.1px;height:18.1px;background:#555555;border-radius:0px 4px 4px 0px;"></div>
<svg style="left:4.7px;top:47.4px;" width="15" height="15" viewBox="0 0 16 16"><rect x="1.6" y="1.6" width="12.8" height="12.8" fill="none" stroke="#fff" stroke-width="1.4" stroke-dasharray="2.7 1.9" stroke-dashoffset="1.3"/></svg>
<svg style="left:23.6px;top:47.4px;" width="15" height="15" viewBox="0 0 16 16"><path d="M5.6 1.6H14.4V10.4H10.4V14.4H1.6V5.6H5.6Z" fill="#d4d4d4"/></svg>
<svg style="left:42.5px;top:47.4px;" width="15" height="15" viewBox="0 0 16 16"><path d="M6.6 1.6H14.4V9.4H10.4V5.6H6.6Z" fill="#d4d4d4"/><path d="M5 6.2H2.2V13.8H9.8V11" fill="none" stroke="#d4d4d4" stroke-width="1.2" stroke-dasharray="2.2 1.6"/></svg>
<svg style="left:61.5px;top:47.4px;" width="15" height="15" viewBox="0 0 16 16"><path d="M5.6 1.6H14.4V10.4H10.4V5.6H5.6Z M1.6 5.6H5.6V10.4H10.4V14.4H1.6Z" fill="#d4d4d4"/></svg>
<svg style="left:80.4px;top:47.4px;" width="15" height="15" viewBox="0 0 16 16"><rect x="1.8" y="1.8" width="12.4" height="12.4" fill="none" stroke="#d4d4d4" stroke-width="1.2" stroke-dasharray="2.6 1.9" stroke-dashoffset="1.3"/><rect x="5" y="5" width="6" height="6" fill="#d4d4d4"/></svg>
<svg style="left:1374px;top:47.2px;" width="16" height="16" viewBox="0 0 16 16"><g stroke="#d0d0d0" stroke-width="1.1" fill="none"><path d="M8 1.5V14.5" stroke-dasharray="2 1.4"/><path d="M6 4C4 2 2 3 2.5 5.5C3 7 4 7.5 3.5 9C3 11 4 13.5 6 12.5"/><path d="M10 4C12 2 14 3 13.5 5.5C13 7 12 7.5 12.5 9C13 11 12 13.5 10 12.5"/></g></svg>
<div style="left:1392.6px;top:45.5px;width:16.8px;height:18.8px;background:#545454;border-radius:4px;border:1px solid #666;"></div>
<span style="left:1396.99px;top:47.65px;line-height:16px;font-size:12px;color:#e6e6e6;">X</span>
<div style="left:1415.8px;top:45.8px;width:94.2px;height:18.3px;background:#282828;border-radius:4px;"></div>
<span style="left:1423.00px;top:47.65px;line-height:16px;font-size:12px;color:#e6e6e6;letter-spacing:-0.087px;">Pose Options</span>
<svg style="left:1499.05px;top:53.475px;" width="7.9" height="5.05" viewBox="0 0 7.9 5.05"><path d="M1 1 L3.95 4.05 L6.9 1" fill="none" stroke="#e6e6e6" stroke-width="1.3" stroke-linecap="round" stroke-linejoin="round"/></svg>
<div style="left:2.4px;top:76px;width:41.3px;height:69.7px;background:#272727;border-radius:5px;"></div>
<div style="left:2.4px;top:110.2px;width:41.3px;height:1px;background:#1c1c1c;"></div>
<div style="left:2.4px;top:76px;width:41.3px;height:34.3px;background:#4772b3;border-radius:5px 5px 0px 0px;"></div>
<div style="left:2.4px;top:150.8px;width:41.3px;height:139.7px;background:#272727;border-radius:5px;"></div>
<div style="left:2.4px;top:185px;width:41.3px;height:1px;background:#1c1c1c;"></div>
<div style="left:2.4px;top:220px;width:41.3px;height:1px;background:#1c1c1c;"></div>
<div style="left:2.4px;top:255px;width:41.3px;height:1px;background:#1c1c1c;"></div>
<div style="left:2.4px;top:296px;width:41.3px;height:69.7px;background:#272727;border-radius:5px;"></div>
<div style="left:2.4px;top:330.2px;width:41.3px;height:1px;background:#1c1c1c;"></div>
<div style="left:2.4px;top:371.1px;width:41.3px;height:34.7px;background:#272727;border-radius:5px;"></div>
<svg style="left:38px;top:104.5px;" width="4" height="4" viewBox="0 0 4 4"><path d="M4 0V4H0Z" fill="#8e8e8e"/></svg>
<svg style="left:38px;top:250px;" width="4" height="4" viewBox="0 0 4 4"><path d="M4 0V4H0Z" fill="#8e8e8e"/></svg>
<svg style="left:38px;top:325.2px;" width="4" height="4" viewBox="0 0 4 4"><path d="M4 0V4H0Z" fill="#8e8e8e"/></svg>
<svg style="left:38px;top:400px;" width="4" height="4" viewBox="0 0 4 4"><path d="M4 0V4H0Z" fill="#8e8e8e"/></svg>
<svg style="left:5.9px;top:76.6px;" width="32" height="32" viewBox="0 0 32 32"><rect x="5.2" y="5.2" width="21.6" height="21.6" fill="none" stroke="#f2b62a" stroke-width="1.3" stroke-dasharray="4.2 2.2" stroke-dashoffset="2.1"/><path d="M13 11.6L21.2 17.8L13.6 22Z" fill="#e4e4e4"/></svg>
<svg style="left:5.9px;top:111.6px;" width="32" height="32" viewBox="0 0 32 32"><circle cx="16" cy="16" r="11" fill="none" stroke="#f0f0f0" stroke-width="1.2"/><circle cx="16" cy="16" r="11" fill="none" stroke="#d8584a" stroke-width="1.2" stroke-dasharray="2.2 6.44" stroke-dashoffset="1.1"/><path d="M16 7.5V13.5M16 18.5V24.5M7.5 16H13.5M18.5 16H24.5" stroke="#8e8e8e" stroke-width="1.7"/></svg>
<svg style="left:5.9px;top:152px;" width="32" height="32" viewBox="0 0 32 32"><g fill="#dcdcdc"><path d="M16 4.6L19 9.4H13Z M16 27.4L19 22.6H13Z M4.6 16L9.4 13V19Z M27.4 16L22.6 13V19Z"/></g><path d="M16 10.5V14M16 18V21.5M10.5 16H14M18 16H21.5" stroke="#b4b4b4" stroke-width="1.5"/></svg>
<svg style="left:5.9px;top:187.2px;" width="32" height="32" viewBox="0 0 32 32"><g fill="none" stroke="#dcdcdc" stroke-width="1.3"><path d="M8.2 11.2A9.4 9.4 0 0 1 24.6 12.4"/><path d="M23.8 20.8A9.4 9.4 0 0 1 7.4 19.6"/></g><path d="M4.2 14.6H10.2L7.2 19Z M27.8 17.4H21.8L24.8 13Z" fill="#dcdcdc"/><path d="M16 12.4L19.6 16L16 19.6L12.4 16Z" fill="#a8a8a8"/></svg>
<svg style="left:5.9px;top:222px;" width="32" height="32" viewBox="0 0 32 32"><rect x="8.6" y="15.4" width="8" height="8" fill="#dcdcdc"/><path d="M9.4 13.4V8.2H23.8V22.6H18.6" fill="none" stroke="#bcbcbc" stroke-width="1.2"/><path d="M17 15L21.6 10.4M18.6 10H22V13.4" fill="none" stroke="#dcdcdc" stroke-width="1.2"/></svg>
<svg style="left:5.9px;top:257.2px;" width="32" height="32" viewBox="0 0 32 32"><rect x="11.8" y="11.8" width="8.4" height="8.4" fill="#dcdcdc"/><circle cx="16" cy="16" r="9.6" fill="none" stroke="#dcdcdc" stroke-width="1.2" stroke-dasharray="8.6 6.5" stroke-dashoffset="-3.2"/><path d="M16 4.4L18.6 8H13.4Z M16 27.6L18.6 24H13.4Z M4.4 16L8 13.4V18.6Z M27.6 16L24 13.4V18.6Z" fill="#dcdcdc"/></svg>
<svg style="left:5.9px;top:297px;" width="32" height="32" viewBox="0 0 32 32"><path d="M8.6 20.2L21 7.8Q22 6.8 23 7.8L25 9.8Q26 10.8 25 11.8L12.6 24.2L7.2 25.6Z" fill="#dcdcdc"/><path d="M9.6 19.2L13.6 23.2" stroke="#272727" stroke-width="0.9"/><path d="M7 27.2C11 28.6 13.6 23.8 17 22.6C21.4 21.2 22.6 26.4 27 26" fill="none" stroke="#b8b8b8" stroke-width="1.2"/></svg>
<svg style="left:5.9px;top:332.7px;" width="32" height="32" viewBox="0 0 32 32"><path d="M9.2 4H13V24.6H9.2Z M7.4 24.6H27.6V28.4H7.4Z" fill="#dcdcdc"/><path d="M13 11.4A13.2 13.2 0 0 1 26.2 24.6H13Z" fill="#9c9ca0" stroke="#dcdcdc" stroke-width="1"/><path d="M9.2 7H11M9.2 10H11M9.2 13H11M9.2 16H11M9.2 19H11M9.2 22H11M15 26.6V28.4M18 26.6V28.4M21 26.6V28.4M24 26.6V28.4" stroke="#272727" stroke-width="0.9"/><path d="M7.4 4H14.8" stroke="#dcdcdc" stroke-width="1.4"/></svg>
<svg style="left:5.9px;top:372.5px;" width="32" height="32" viewBox="0 0 32 32"><path d="M5.4 11.6C9 16.4 12 19.6 16 20.6C20 19.6 23 16.4 26.6 11.6" fill="none" stroke="#c4c4c4" stroke-width="1.1" stroke-dasharray="2.2 1.8"/><path d="M16 17.8L19.6 21.4L16 25L12.4 21.4Z" fill="#a4a4a4"/><path d="M4.4 8.2L6.4 10.2L4.4 12.2L2.4 10.2Z M27.6 8.2L29.6 10.2L27.6 12.2L25.6 10.2Z" fill="#dcdcdc"/></svg>
<span style="left:61.00px;top:76.25px;line-height:16px;font-size:12px;color:#ffffff;letter-spacing:0.071px;text-shadow:0 0 1.5px #000,0 0 1.5px #000,0 1px 1.5px rgba(0,0,0,.8);-webkit-text-stroke:0.4px #ffffff;">Front Orthographic</span>
<span style="left:61.00px;top:94.25px;line-height:16px;font-size:12px;color:#ecc81c;letter-spacing:-0.247px;text-shadow:0 0 1.5px #000,0 0 1.5px #000,0 1px 1.5px rgba(0,0,0,.8);-webkit-text-stroke:0.4px #ecc81c;">(0) Armature : CTRL_Avatar_UpperBody</span>
<span style="left:61.00px;top:112.25px;line-height:16px;font-size:12px;color:#ffffff;letter-spacing:-0.027px;text-shadow:0 0 1.5px #000,0 0 1.5px #000,0 1px 1.5px rgba(0,0,0,.8);-webkit-text-stroke:0.4px #ffffff;">10 Centimeters</span>
<svg style="left:1120.3px;top:75.2px;" width="85" height="85" viewBox="0 0 85 85"><g stroke-width="2"><path d="M42.5 42.5V10.5" stroke="#4878cc"/><path d="M42.5 42.5H74.5" stroke="#d04a62"/><path d="M42.5 42.5V66.5" stroke="#4878cc"/><path d="M42.5 42.5H18.5" stroke="#d04a62"/></g><circle cx="10.5" cy="42.5" r="7.8" fill="#c8828e" stroke="#d04a62" stroke-width="1"/><circle cx="42.5" cy="74.5" r="7.8" fill="#8298c4" stroke="#4878cc" stroke-width="1"/><circle cx="42.5" cy="10.5" r="8.3" fill="#4878cc"/><circle cx="74.5" cy="42.5" r="8.3" fill="#d04a62"/><circle cx="42.5" cy="42.5" r="8.3" fill="#cbc21c"/><g font-family="Liberation Sans, sans-serif" font-size="11" text-anchor="middle" fill="#111"><text x="42.5" y="14.5">Z</text><text x="74.5" y="46.5">X</text><text x="42" y="46.5">-Y</text></g></svg>
<div style="left:1177px;top:159px;width:28px;height:28px;background:#717171;border-radius:14px;"></div>
<div style="left:1177px;top:189px;width:28px;height:28px;background:#717171;border-radius:14px;"></div>
<div style="left:1177px;top:219px;width:28px;height:28px;background:#717171;border-radius:14px;"></div>
<div style="left:1177px;top:249px;width:28px;height:28px;background:#717171;border-radius:14px;"></div>
<svg style="left:1182px;top:164px;" width="18" height="18" viewBox="0 0 18 18"><circle cx="9.5" cy="6.5" r="4.6" fill="none" stroke="#f0f0f0" stroke-width="1.4"/><path d="M6.3 10L2 14.5" stroke="#f0f0f0" stroke-width="1.8" stroke-linecap="round"/><path d="M9.5 4.3V8.7M7.3 6.5H11.7" stroke="#f0f0f0" stroke-width="1"/></svg>
<svg style="left:1182px;top:194px;" width="18" height="18" viewBox="0 0 18 18"><path d="M5.5 9V4.5Q5.5 3.6 6.3 3.6Q7.1 3.6 7.1 4.5V3Q7.1 2 8 2Q8.9 2 8.9 3V2.6Q8.9 1.8 9.7 1.8Q10.6 1.8 10.6 2.8V3.8Q10.6 3 11.4 3Q12.2 3 12.2 4V10.5Q12.2 15.5 8.5 15.5Q6 15.5 4.8 13L2.6 9.3Q2.3 8.5 3 8.2Q3.8 8 4.3 8.8Z" fill="#f0f0f0"/></svg>
<svg style="left:1182px;top:224px;" width="18" height="18" viewBox="0 0 18 18"><g fill="none" stroke="#f0f0f0" stroke-width="1.2"><circle cx="6" cy="5" r="2.6"/><circle cx="11.5" cy="4.5" r="3"/><rect x="4" y="8.5" width="8.5" height="6" rx="1"/><path d="M12.5 11.5L15.5 9.8V13.5L12.5 12"/><path d="M2 10.5H4M2 12.5H4"/></g></svg>
<svg style="left:1182px;top:254px;" width="18" height="18" viewBox="0 0 18 18"><g fill="none" stroke="#f0f0f0" stroke-width="1.2"><rect x="2.5" y="2.5" width="13" height="13"/><path d="M6.8 2.5V15.5M11.2 2.5V15.5M2.5 6.8H15.5M2.5 11.2H15.5"/></g></svg>
<div style="left:1497px;top:68px;width:19.5px;height:593px;background:#1c1c1c;"></div>
<div style="left:1497px;top:73.5px;width:16.5px;height:39.5px;background:#353535;border-radius:0px 4px 4px 0px;border:1px solid #484848;border-left:none;"></div>
<span style="left:1513.5px;top:73.5px;width:39.5px;height:16px;line-height:16px;text-align:center;transform-origin:0 0;transform:rotate(90deg);font-size:12px;color:#ffffff;">Item</span>
<div style="left:1497px;top:118px;width:16.5px;height:39px;background:#242424;border-radius:0px 4px 4px 0px;border:1px solid #343434;border-left:none;"></div>
<span style="left:1513.5px;top:118px;width:39px;height:16px;line-height:16px;text-align:center;transform-origin:0 0;transform:rotate(90deg);font-size:12px;color:#d0d0d0;">Tool</span>
<div style="left:1497px;top:162px;width:16.5px;height:41px;background:#242424;border-radius:0px 4px 4px 0px;border:1px solid #343434;border-left:none;"></div>
<span style="left:1513.5px;top:162px;width:41px;height:16px;line-height:16px;text-align:center;transform-origin:0 0;transform:rotate(90deg);font-size:12px;color:#d0d0d0;">View</span>
<div style="left:1221px;top:70px;width:269px;height:306px;background:#3d3d3d;border-radius:5px;"></div>
<svg style="left:1229px;top:80.25px;" width="11" height="6.5" viewBox="0 0 11 6.5"><path d="M1 1 L5.5 5.5 L10 1" fill="none" stroke="#e6e6e6" stroke-width="1.3" stroke-linecap="round" stroke-linejoin="round"/></svg>
<span style="left:1243.00px;top:75.45px;line-height:16px;font-size:12px;color:#e6e6e6;letter-spacing:-0.026px;">Transform</span>
<svg style="left:1472px;top:80.5px;" width="12" height="6" viewBox="0 0 12 6"><rect x="0" y="0" width="1.4" height="1.4" fill="#8c8c8c"/><rect x="0" y="3.4" width="1.4" height="1.4" fill="#8c8c8c"/><rect x="3" y="0" width="1.4" height="1.4" fill="#8c8c8c"/><rect x="3" y="3.4" width="1.4" height="1.4" fill="#8c8c8c"/><rect x="6" y="0" width="1.4" height="1.4" fill="#8c8c8c"/><rect x="6" y="3.4" width="1.4" height="1.4" fill="#8c8c8c"/><rect x="9" y="0" width="1.4" height="1.4" fill="#8c8c8c"/><rect x="9" y="3.4" width="1.4" height="1.4" fill="#8c8c8c"/></svg>
<span style="left:1230.00px;top:105.45px;line-height:16px;font-size:12px;color:#e6e6e6;letter-spacing:0.033px;">Location:</span>
<div style="left:1230px;top:124.1px;width:194px;height:17.8px;background:#85762b;border-radius:4px 4px 0px 0px;"></div>
<span style="left:1245.00px;top:125.45px;line-height:16px;font-size:12px;color:#ffffff;text-shadow:0 1px 1px rgba(0,0,0,.75),0 0 2px rgba(0,0,0,.6);">X</span>
<span style="left:1390.98px;top:125.45px;line-height:16px;font-size:12px;color:#ffffff;text-shadow:0 1px 1px rgba(0,0,0,.75),0 0 2px rgba(0,0,0,.6);">0 m</span>
<svg style="left:1449.2px;top:124.4px;" width="16" height="16" viewBox="0 0 16 16"><g fill="none" stroke="#b4b4b4" stroke-width="1.2"><path d="M1.3 6.2A3.2 3.2 0 0 1 7.6 5.6V7.6" stroke-linecap="round"/><rect x="6.2" y="7.6" width="8.4" height="5.6" rx="0.6"/></g><rect x="9.9" y="9.2" width="1" height="2.4" fill="#b4b4b4"/></svg>
<div style="left:1230px;top:143px;width:194px;height:18.8px;background:#85762b;"></div>
<span style="left:1245.00px;top:144.85px;line-height:16px;font-size:12px;color:#ffffff;text-shadow:0 1px 1px rgba(0,0,0,.75),0 0 2px rgba(0,0,0,.6);">Y</span>
<span style="left:1356.97px;top:144.85px;line-height:16px;font-size:12px;color:#ffffff;text-shadow:0 1px 1px rgba(0,0,0,.75),0 0 2px rgba(0,0,0,.6);">-1.4889 m</span>
<svg style="left:1449.2px;top:143.8px;" width="16" height="16" viewBox="0 0 16 16"><g fill="none" stroke="#b4b4b4" stroke-width="1.2"><path d="M1.3 6.2A3.2 3.2 0 0 1 7.6 5.6V7.6" stroke-linecap="round"/><rect x="6.2" y="7.6" width="8.4" height="5.6" rx="0.6"/></g><rect x="9.9" y="9.2" width="1" height="2.4" fill="#b4b4b4"/></svg>
<div style="left:1230px;top:163.2px;width:194px;height:18.8px;background:#85762b;border-radius:0px 0px 4px 4px;"></div>
<span style="left:1245.00px;top:165.05px;line-height:16px;font-size:12px;color:#ffffff;text-shadow:0 1px 1px rgba(0,0,0,.75),0 0 2px rgba(0,0,0,.6);">Z</span>
<span style="left:1390.98px;top:165.05px;line-height:16px;font-size:12px;color:#ffffff;text-shadow:0 1px 1px rgba(0,0,0,.75),0 0 2px rgba(0,0,0,.6);">0 m</span>
<svg style="left:1449.2px;top:164px;" width="16" height="16" viewBox="0 0 16 16"><g fill="none" stroke="#b4b4b4" stroke-width="1.2"><path d="M1.3 6.2A3.2 3.2 0 0 1 7.6 5.6V7.6" stroke-linecap="round"/><rect x="6.2" y="7.6" width="8.4" height="5.6" rx="0.6"/></g><rect x="9.9" y="9.2" width="1" height="2.4" fill="#b4b4b4"/></svg>
<span style="left:1230.00px;top:187.45px;line-height:16px;font-size:12px;color:#e6e6e6;">Rotation:</span>
<div style="left:1230px;top:206.1px;width:194px;height:17.8px;background:#85762b;border-radius:4px 4px 0px 0px;"></div>
<span style="left:1245.00px;top:207.45px;line-height:16px;font-size:12px;color:#ffffff;text-shadow:0 1px 1px rgba(0,0,0,.75),0 0 2px rgba(0,0,0,.6);">X</span>
<span style="left:1399.52px;top:207.45px;line-height:16px;font-size:12px;color:#ffffff;text-shadow:0 1px 1px rgba(0,0,0,.75),0 0 2px rgba(0,0,0,.6);">0°</span>
<svg style="left:1449.2px;top:206.4px;" width="16" height="16" viewBox="0 0 16 16"><g fill="none" stroke="#b4b4b4" stroke-width="1.2"><path d="M1.3 6.2A3.2 3.2 0 0 1 7.6 5.6V7.6" stroke-linecap="round"/><rect x="6.2" y="7.6" width="8.4" height="5.6" rx="0.6"/></g><rect x="9.9" y="9.2" width="1" height="2.4" fill="#b4b4b4"/></svg>
<div style="left:1230px;top:225px;width:194px;height:18.8px;background:#85762b;"></div>
<span style="left:1245.00px;top:226.85px;line-height:16px;font-size:12px;color:#ffffff;text-shadow:0 1px 1px rgba(0,0,0,.75),0 0 2px rgba(0,0,0,.6);">Y</span>
<span style="left:1399.52px;top:226.85px;line-height:16px;font-size:12px;color:#ffffff;text-shadow:0 1px 1px rgba(0,0,0,.75),0 0 2px rgba(0,0,0,.6);">0°</span>
<svg style="left:1449.2px;top:225.8px;" width="16" height="16" viewBox="0 0 16 16"><g fill="none" stroke="#b4b4b4" stroke-width="1.2"><path d="M1.3 6.2A3.2 3.2 0 0 1 7.6 5.6V7.6" stroke-linecap="round"/><rect x="6.2" y="7.6" width="8.4" height="5.6" rx="0.6"/></g><rect x="9.9" y="9.2" width="1" height="2.4" fill="#b4b4b4"/></svg>
<div style="left:1230px;top:245.2px;width:194px;height:18.8px;background:#85762b;border-radius:0px 0px 4px 4px;"></div>
<span style="left:1245.00px;top:247.05px;line-height:16px;font-size:12px;color:#ffffff;text-shadow:0 1px 1px rgba(0,0,0,.75),0 0 2px rgba(0,0,0,.6);">Z</span>
<span style="left:1399.52px;top:247.05px;line-height:16px;font-size:12px;color:#ffffff;text-shadow:0 1px 1px rgba(0,0,0,.75),0 0 2px rgba(0,0,0,.6);">0°</span>
<svg style="left:1449.2px;top:246px;" width="16" height="16" viewBox="0 0 16 16"><g fill="none" stroke="#b4b4b4" stroke-width="1.2"><path d="M1.3 6.2A3.2 3.2 0 0 1 7.6 5.6V7.6" stroke-linecap="round"/><rect x="6.2" y="7.6" width="8.4" height="5.6" rx="0.6"/></g><rect x="9.9" y="9.2" width="1" height="2.4" fill="#b4b4b4"/></svg>
<div style="left:1230px;top:268.2px;width:251px;height:17.3px;background:#282828;border-radius:4px;"></div>
<span style="left:1237.00px;top:269.45px;line-height:16px;font-size:12px;color:#e6e6e6;letter-spacing:-0.299px;">XYZ Euler</span>
<svg style="left:1471.05px;top:274.975px;" width="7.9" height="5.05" viewBox="0 0 7.9 5.05"><path d="M1 1 L3.95 4.05 L6.9 1" fill="none" stroke="#e6e6e6" stroke-width="1.3" stroke-linecap="round" stroke-linejoin="round"/></svg>
<span style="left:1230.00px;top:291.45px;line-height:16px;font-size:12px;color:#e6e6e6;letter-spacing:-0.393px;">Scale:</span>
<div style="left:1230px;top:310.1px;width:194px;height:17.8px;background:#85762b;border-radius:4px 4px 0px 0px;"></div>
<span style="left:1245.00px;top:311.45px;line-height:16px;font-size:12px;color:#ffffff;text-shadow:0 1px 1px rgba(0,0,0,.75),0 0 2px rgba(0,0,0,.6);">X</span>
<span style="left:1380.97px;top:311.45px;line-height:16px;font-size:12px;color:#ffffff;text-shadow:0 1px 1px rgba(0,0,0,.75),0 0 2px rgba(0,0,0,.6);">1.000</span>
<svg style="left:1449.2px;top:310.4px;" width="16" height="16" viewBox="0 0 16 16"><g fill="none" stroke="#b4b4b4" stroke-width="1.2"><path d="M1.3 6.2A3.2 3.2 0 0 1 7.6 5.6V7.6" stroke-linecap="round"/><rect x="6.2" y="7.6" width="8.4" height="5.6" rx="0.6"/></g><rect x="9.9" y="9.2" width="1" height="2.4" fill="#b4b4b4"/></svg>
<div style="left:1230px;top:329px;width:194px;height:18.8px;background:#85762b;"></div>
<span style="left:1245.00px;top:330.85px;line-height:16px;font-size:12px;color:#ffffff;text-shadow:0 1px 1px rgba(0,0,0,.75),0 0 2px rgba(0,0,0,.6);">Y</span>
<span style="left:1380.97px;top:330.85px;line-height:16px;font-size:12px;color:#ffffff;text-shadow:0 1px 1px rgba(0,0,0,.75),0 0 2px rgba(0,0,0,.6);">1.000</span>
<svg style="left:1449.2px;top:329.8px;" width="16" height="16" viewBox="0 0 16 16"><g fill="none" stroke="#b4b4b4" stroke-width="1.2"><path d="M1.3 6.2A3.2 3.2 0 0 1 7.6 5.6V7.6" stroke-linecap="round"/><rect x="6.2" y="7.6" width="8.4" height="5.6" rx="0.6"/></g><rect x="9.9" y="9.2" width="1" height="2.4" fill="#b4b4b4"/></svg>
<div style="left:1230px;top:349.2px;width:194px;height:18.8px;background:#85762b;border-radius:0px 0px 4px 4px;"></div>
<span style="left:1245.00px;top:351.05px;line-height:16px;font-size:12px;color:#ffffff;text-shadow:0 1px 1px rgba(0,0,0,.75),0 0 2px rgba(0,0,0,.6);">Z</span>
<span style="left:1380.97px;top:351.05px;line-height:16px;font-size:12px;color:#ffffff;text-shadow:0 1px 1px rgba(0,0,0,.75),0 0 2px rgba(0,0,0,.6);">1.000</span>
<svg style="left:1449.2px;top:350px;" width="16" height="16" viewBox="0 0 16 16"><g fill="none" stroke="#b4b4b4" stroke-width="1.2"><path d="M1.3 6.2A3.2 3.2 0 0 1 7.6 5.6V7.6" stroke-linecap="round"/><rect x="6.2" y="7.6" width="8.4" height="5.6" rx="0.6"/></g><rect x="9.9" y="9.2" width="1" height="2.4" fill="#b4b4b4"/></svg>
<div style="left:1221px;top:379px;width:269px;height:25px;background:#3d3d3d;border-radius:5px;"></div>
<svg style="left:1231.5px;top:387px;" width="6" height="10" viewBox="0 0 6 10"><path d="M1 1 L5 5 L1 9" fill="none" stroke="#e6e6e6" stroke-width="1.3" stroke-linecap="round" stroke-linejoin="round"/></svg>
<span style="left:1243.00px;top:384.45px;line-height:16px;font-size:12px;color:#e6e6e6;letter-spacing:-0.070px;">Properties</span>
<svg style="left:1472px;top:389.5px;" width="12" height="6" viewBox="0 0 12 6"><rect x="0" y="0" width="1.4" height="1.4" fill="#8c8c8c"/><rect x="0" y="3.4" width="1.4" height="1.4" fill="#8c8c8c"/><rect x="3" y="0" width="1.4" height="1.4" fill="#8c8c8c"/><rect x="3" y="3.4" width="1.4" height="1.4" fill="#8c8c8c"/><rect x="6" y="0" width="1.4" height="1.4" fill="#8c8c8c"/><rect x="6" y="3.4" width="1.4" height="1.4" fill="#8c8c8c"/><rect x="9" y="0" width="1.4" height="1.4" fill="#8c8c8c"/><rect x="9" y="3.4" width="1.4" height="1.4" fill="#8c8c8c"/></svg>
<svg style="left:1406px;top:594px;" width="16" height="24" viewBox="0 0 16 24"><path d="M2.5 2.5V18L6.3 14.6L9 20.5L11.6 19.3L9 13.6L14 13.4Z" fill="#fff" stroke="#111" stroke-width="1.1" stroke-linejoin="round"/></svg>
<div style="left:1520px;top:17px;width:393px;height:291.7px;background:#282828;border-radius:5px 0px 0px 5px;"></div>
<div style="left:1520px;top:63px;width:388px;height:20.2px;background:#2b2b2b;"></div>
<div style="left:1520px;top:103.4px;width:388px;height:20.2px;background:#2b2b2b;"></div>
<div style="left:1520px;top:143.8px;width:388px;height:20.2px;background:#2b2b2b;"></div>
<div style="left:1520px;top:184.2px;width:388px;height:20.2px;background:#2b2b2b;"></div>
<div style="left:1520px;top:224.6px;width:388px;height:20.2px;background:#2b2b2b;"></div>
<div style="left:1520px;top:265px;width:388px;height:20.2px;background:#2b2b2b;"></div>
<div style="left:1520px;top:17px;width:393px;height:26px;background:#2a2a2a;border-radius:5px 0px 0px 0px;"></div>
<div style="left:1528px;top:19.5px;width:31.5px;height:19px;background:#282828;border-radius:4px;border:1px solid #3d3d3d;"></div>
<svg style="left:1533px;top:21px;" width="16" height="16" viewBox="0 0 16 16"><rect x="2" y="2" width="4.4" height="2.6" fill="#e6e6e6"/><rect x="7.5" y="7" width="6.5" height="2.6" fill="#e6e6e6"/><rect x="7.5" y="11.4" width="6.5" height="2.6" fill="#e6e6e6"/><path d="M4 5V12.7H7M4 8.3H7" fill="none" stroke="#e6e6e6" stroke-width="1"/></svg>
<svg style="left:1549.05px;top:26.975px;" width="7.9" height="5.05" viewBox="0 0 7.9 5.05"><path d="M1 1 L3.95 4.05 L6.9 1" fill="none" stroke="#e6e6e6" stroke-width="1.3" stroke-linecap="round" stroke-linejoin="round"/></svg>
<div style="left:1565px;top:19.5px;width:31.5px;height:19px;background:#282828;border-radius:4px;border:1px solid #3d3d3d;"></div>
<svg style="left:1570px;top:21px;" width="16" height="16" viewBox="0 0 16 16"><g fill="none" stroke="#e6e6e6" stroke-width="1"><path d="M2.5 6.5V14H10.5M4.3 5V12.2H12.3"/><rect x="6.2" y="2" width="8" height="8.2"/></g><path d="M6.6 10L9.4 5L11 8L12 7L13.8 10Z" fill="#e6e6e6"/><rect x="11.5" y="3.2" width="1.6" height="1.6" fill="#e6e6e6"/></svg>
<svg style="left:1586.05px;top:26.975px;" width="7.9" height="5.05" viewBox="0 0 7.9 5.05"><path d="M1 1 L3.95 4.05 L6.9 1" fill="none" stroke="#e6e6e6" stroke-width="1.3" stroke-linecap="round" stroke-linejoin="round"/></svg>
<div style="left:1646px;top:19.5px;width:118.5px;height:19px;background:#1d1d1d;border-radius:4px;border:1px solid #3d3d3d;"></div>
<svg style="left:1649px;top:21px;" width="16" height="16" viewBox="0 0 16 16"><circle cx="9.5" cy="6.5" r="4.2" fill="none" stroke="#e6e6e6" stroke-width="1.3"/><path d="M6.5 9.6L2 14" stroke="#e6e6e6" stroke-width="1.5" stroke-linecap="round"/></svg>
<span style="left:1672.00px;top:21.45px;line-height:16px;font-size:12px;color:#808080;letter-spacing:-0.505px;">Search</span>
<div style="left:1849.5px;top:19.5px;width:31px;height:19px;background:#282828;border-radius:4px;border:1px solid #3d3d3d;"></div>
<svg style="left:1853px;top:21px;" width="16" height="16" viewBox="0 0 16 16"><path d="M2.5 2.5H13.5L9.3 8V14L6.7 12.5V8Z" fill="none" stroke="#e6e6e6" stroke-width="1.2" stroke-linejoin="round"/></svg>
<svg style="left:1870.05px;top:26.975px;" width="7.9" height="5.05" viewBox="0 0 7.9 5.05"><path d="M1 1 L3.95 4.05 L6.9 1" fill="none" stroke="#e6e6e6" stroke-width="1.3" stroke-linecap="round" stroke-linejoin="round"/></svg>
<div style="left:1886px;top:19.5px;width:19px;height:19px;background:#545454;border-radius:4px;border:1px solid #545454;"></div>
<svg style="left:1887.5px;top:21px;" width="16" height="16" viewBox="0 0 16 16"><g fill="none" stroke="#e6e6e6" stroke-width="1"><path d="M2.5 5.5H8M2.5 5.5V8H12.5V6M3.5 8V14H11.5V8"/><path d="M6 10.5H9"/></g><circle cx="12" cy="4" r="3" fill="#e6e6e6"/><path d="M12 2.3V5.7M10.3 4H13.7" stroke="#545454" stroke-width="1"/></svg>
<div style="left:1540.2px;top:44px;width:19.6px;height:18px;background:#555555;border-radius:4px;border:1px solid #777;"></div>
<svg style="left:1542px;top:45px;" width="16" height="16" viewBox="0 0 16 16"><rect x="1.5" y="2" width="13" height="3.6" fill="#e0e0e0"/><path d="M2.5 6.8H13.5V14H2.5Z" fill="#e0e0e0"/><rect x="6.3" y="8.3" width="3.4" height="1.5" fill="#282828"/></svg>
<span style="left:1564.00px;top:46.05px;line-height:16px;font-size:12px;color:#f0f0f0;letter-spacing:-0.129px;">Scene Collection</span>
<div style="left:1549px;top:88px;width:1px;height:50px;background:#5a5a5a;"></div>
<svg style="left:1545.52px;top:70.5412px;" width="9.965" height="6.1175" viewBox="0 0 9.965 6.1175"><path d="M1 1 L4.9825 5.1175 L8.965 1" fill="none" stroke="#c8c8c8" stroke-width="1.3" stroke-linecap="round" stroke-linejoin="round"/></svg>
<svg style="left:1562px;top:65.1px;" width="16" height="16" viewBox="0 0 16 16"><rect x="1.5" y="2" width="13" height="3.6" fill="#e0e0e0"/><path d="M2.5 6.8H13.5V14H2.5Z" fill="#e0e0e0"/><rect x="6.3" y="8.3" width="3.4" height="1.5" fill="#282828"/></svg>
<span style="left:1584.00px;top:66.15px;line-height:16px;font-size:12px;color:#e6e6e6;letter-spacing:-0.078px;">Avatar</span>
<svg style="left:1567.6px;top:88.5px;" width="5.8" height="9.6" viewBox="0 0 5.8 9.6"><path d="M1 1 L4.8 4.8 L1 8.6" fill="none" stroke="#c8c8c8" stroke-width="1.3" stroke-linecap="round" stroke-linejoin="round"/></svg>
<svg style="left:1582px;top:85.3px;" width="16" height="16" viewBox="0 0 16 16"><rect x="1.5" y="2" width="13" height="3.6" fill="#e0e0e0"/><path d="M2.5 6.8H13.5V14H2.5Z" fill="#e0e0e0"/><rect x="6.3" y="8.3" width="3.4" height="1.5" fill="#282828"/></svg>
<span style="left:1604.00px;top:86.35px;line-height:16px;font-size:12px;color:#e6e6e6;letter-spacing:-0.373px;">Avatar_ShapeB</span>
<svg style="left:1705px;top:84.9px;" width="15" height="15" viewBox="0 0 15 15"><path d="M2.2 2.6H12.8L7.5 13Z" fill="none" stroke="#c9a05a" stroke-width="2.5" stroke-linejoin="miter"/></svg>
<span style="left:1718.50px;top:90.05px;line-height:16px;font-size:10px;color:#e0e0e0;text-shadow:0 0 2px #000,0 0 2px #000,0 0 1px #000;">8</span>
<svg style="left:1567.6px;top:108.7px;" width="5.8" height="9.6" viewBox="0 0 5.8 9.6"><path d="M1 1 L4.8 4.8 L1 8.6" fill="none" stroke="#6a6a6a" stroke-width="1.3" stroke-linecap="round" stroke-linejoin="round"/></svg>
<svg style="left:1582px;top:105.5px;" width="16" height="16" viewBox="0 0 16 16"><rect x="1.5" y="2" width="13" height="3.6" fill="#7a7a7a"/><path d="M2.5 6.8H13.5V14H2.5Z" fill="#7a7a7a"/><rect x="6.3" y="8.3" width="3.4" height="1.5" fill="#282828"/></svg>
<span style="left:1604.00px;top:106.55px;line-height:16px;font-size:12px;color:#7e7e7e;letter-spacing:-0.373px;">Avatar_ShapeA</span>
<svg style="left:1705.5px;top:105.1px;" width="15" height="15" viewBox="0 0 15 15"><path d="M2.2 2.6H12.8L7.5 13Z" fill="none" stroke="#7d6434" stroke-width="2.5" stroke-linejoin="miter"/></svg>
<span style="left:1719.00px;top:110.25px;line-height:16px;font-size:10px;color:#c8c8c8;text-shadow:0 0 2px #000,0 0 2px #000,0 0 1px #000;">8</span>
<svg style="left:1523px;top:126.2px;" width="16" height="16" viewBox="0 0 16 16"><g stroke="#e0e0e0" stroke-width="1.05" fill="none" stroke-linecap="round"><circle cx="8" cy="2.8" r="1.3" fill="#e0e0e0" stroke="none"/><path d="M5.5 5.8L8 5.4L12.6 5M8 5.4V9.6M8 9.6L4.6 15M8 9.6L11.4 15"/></g></svg>
<svg style="left:1522.5px;top:127.7px;" width="4" height="4" viewBox="0 0 4 4"><rect x="0" y="0" width="3.6" height="3.6" fill="#e0e0e0"/></svg>
<svg style="left:1567.6px;top:128.9px;" width="5.8" height="9.6" viewBox="0 0 5.8 9.6"><path d="M1 1 L4.8 4.8 L1 8.6" fill="none" stroke="#c8c8c8" stroke-width="1.3" stroke-linecap="round" stroke-linejoin="round"/></svg>
<div style="left:1580.2px;top:124.4px;width:19.6px;height:18px;background:#555555;border-radius:4px;border:1px solid #707070;"></div>
<svg style="left:1582px;top:125.4px;" width="16" height="16" viewBox="0 0 16 16"><circle cx="8" cy="3" r="1.9" fill="#dfa04c"/><path d="M2 6.2L8 5.2L14 6.2M8 5.2V9.5M8 9.5L4.5 14.5M8 9.5L11.5 14.5" fill="none" stroke="#dfa04c" stroke-width="2.1" stroke-linecap="round" stroke-linejoin="round"/></svg>
<span style="left:1604.00px;top:126.75px;line-height:16px;font-size:12px;color:#f0b432;letter-spacing:-0.045px;">Armature</span>
<svg style="left:1675px;top:125.7px;" width="16" height="16" viewBox="0 0 16 16"><path d="M2 3.5H5.5C8 3.5 8 5 8 8C8 11 8 12.5 10.5 12.5H13.5M11 10L13.8 12.5L11 15" fill="none" stroke="#d0d0d0" stroke-width="1.1" stroke-linecap="round" stroke-linejoin="round"/></svg>
<div style="left:1693.2px;top:124.4px;width:19.6px;height:18px;background:#555555;border-radius:4px;border:1px solid #707070;"></div>
<svg style="left:1695px;top:125.4px;" width="16" height="16" viewBox="0 0 16 16"><circle cx="8.5" cy="3" r="1.4" fill="#2f78c4"/><path d="M2.5 3L6 6.5L10.5 6L14 7.5M8 6.3L7.5 10M7.5 10L3.5 14.5M7.5 10L11 11.5L13 14" fill="none" stroke="#2f78c4" stroke-width="1.2" stroke-linecap="round" stroke-linejoin="round"/></svg>
<svg style="left:1715px;top:125.4px;" width="16" height="16" viewBox="0 0 16 16"><circle cx="8" cy="3" r="1.5" fill="#2f78c4"/><rect x="10.5" y="1" width="3" height="3" fill="none" stroke="#2f78c4" stroke-width="0.9"/><path d="M2.5 5.5L8 5.5L12 4.5M8 5.5V9.5M8 9.5L5 14.5M8 9.5L11 14.5" fill="none" stroke="#2f78c4" stroke-width="1.2" stroke-linecap="round"/></svg>
<svg style="left:1735px;top:125.3px;" width="15" height="15" viewBox="0 0 15 15"><path d="M2.2 2.6H12.8L7.5 13Z" fill="none" stroke="#c9a05a" stroke-width="2.5" stroke-linejoin="miter"/></svg>
<span style="left:1743.90px;top:130.45px;line-height:16px;font-size:10px;color:#e0e0e0;text-shadow:0 0 2px #000,0 0 2px #000,0 0 1px #000;">16</span>
<svg style="left:1547.6px;top:149.1px;" width="5.8" height="9.6" viewBox="0 0 5.8 9.6"><path d="M1 1 L4.8 4.8 L1 8.6" fill="none" stroke="#6a6a6a" stroke-width="1.3" stroke-linecap="round" stroke-linejoin="round"/></svg>
<svg style="left:1562px;top:145.9px;" width="16" height="16" viewBox="0 0 16 16"><rect x="1.5" y="2" width="13" height="3.6" fill="#7a7a7a"/><path d="M2.5 6.8H13.5V14H2.5Z" fill="#7a7a7a"/><rect x="6.3" y="8.3" width="3.4" height="1.5" fill="#282828"/></svg>
<span style="left:1584.00px;top:146.95px;line-height:16px;font-size:12px;color:#7e7e7e;letter-spacing:-0.340px;">Prop</span>
<svg style="left:1631px;top:145.6px;" width="16" height="16" viewBox="0 0 16 16"><circle cx="8" cy="3" r="1.9" fill="#8e6a34"/><path d="M2 6.2L8 5.2L14 6.2M8 5.2V9.5M8 9.5L4.5 14.5M8 9.5L11.5 14.5" fill="none" stroke="#8e6a34" stroke-width="2.1" stroke-linecap="round" stroke-linejoin="round"/></svg>
<svg style="left:1547.6px;top:169.3px;" width="5.8" height="9.6" viewBox="0 0 5.8 9.6"><path d="M1 1 L4.8 4.8 L1 8.6" fill="none" stroke="#6a6a6a" stroke-width="1.3" stroke-linecap="round" stroke-linejoin="round"/></svg>
<svg style="left:1562px;top:166.1px;" width="16" height="16" viewBox="0 0 16 16"><rect x="1.5" y="2" width="13" height="3.6" fill="#7a7a7a"/><path d="M2.5 6.8H13.5V14H2.5Z" fill="#7a7a7a"/><rect x="6.3" y="8.3" width="3.4" height="1.5" fill="#282828"/></svg>
<span style="left:1584.00px;top:167.15px;line-height:16px;font-size:12px;color:#7e7e7e;letter-spacing:-0.268px;">Animation_Area_Reference</span>
<svg style="left:1747.5px;top:165.7px;" width="15" height="15" viewBox="0 0 15 15"><path d="M2.2 2.6H12.8L7.5 13Z" fill="none" stroke="#7d6434" stroke-width="2.5" stroke-linejoin="miter"/></svg>
<span style="left:1761.00px;top:170.85px;line-height:16px;font-size:10px;color:#c8c8c8;text-shadow:0 0 2px #000,0 0 2px #000,0 0 1px #000;">2</span>
<div style="left:1848.5px;top:67.6px;width:11px;height:11px;background:#e8e8e8;border-radius:1.5px;"></div>
<svg style="left:1848.5px;top:67.6px;" width="11" height="11" viewBox="0 0 11 11"><path d="M2.2 5.6L4.5 8.1L8.9 2.9" fill="none" stroke="#1c1c1c" stroke-width="1.9" stroke-linecap="round" stroke-linejoin="round"/></svg>
<svg style="left:1867.25px;top:65.85px;" width="14.5" height="14.5" viewBox="0 0 16 16"><path d="M0.8 8C3.6 2.4 12.4 2.4 15.2 8C12.4 13.6 3.6 13.6 0.8 8Z" fill="#e6e6e6"/><circle cx="8" cy="8" r="3.1" fill="#282828"/><circle cx="8" cy="8" r="1.5" fill="#e6e6e6"/></svg>
<svg style="left:1887.25px;top:65.85px;" width="14.5" height="14.5" viewBox="0 0 16 16"><path d="M1 4.6H4.2L5.2 2.6H10.8L11.8 4.6H15V13.6H1Z" fill="#e0e0e0" stroke="#e0e0e0" stroke-width="0.8" stroke-linejoin="round"/><circle cx="8" cy="8.9" r="3.3" fill="none" stroke="#282828" stroke-width="1.1"/><circle cx="8" cy="8.9" r="1.3" fill="#282828"/></svg>
<div style="left:1848.5px;top:87.8px;width:11px;height:11px;background:#e8e8e8;border-radius:1.5px;"></div>
<svg style="left:1848.5px;top:87.8px;" width="11" height="11" viewBox="0 0 11 11"><path d="M2.2 5.6L4.5 8.1L8.9 2.9" fill="none" stroke="#1c1c1c" stroke-width="1.9" stroke-linecap="round" stroke-linejoin="round"/></svg>
<svg style="left:1867.25px;top:86.05px;" width="14.5" height="14.5" viewBox="0 0 16 16"><path d="M0.8 8C3.6 2.4 12.4 2.4 15.2 8C12.4 13.6 3.6 13.6 0.8 8Z" fill="#e6e6e6"/><circle cx="8" cy="8" r="3.1" fill="#282828"/><circle cx="8" cy="8" r="1.5" fill="#e6e6e6"/></svg>
<svg style="left:1887.25px;top:86.05px;" width="14.5" height="14.5" viewBox="0 0 16 16"><path d="M1 4.6H4.2L5.2 2.6H10.8L11.8 4.6H15V13.6H1Z" fill="#e0e0e0" stroke="#e0e0e0" stroke-width="0.8" stroke-linejoin="round"/><circle cx="8" cy="8.9" r="3.3" fill="none" stroke="#282828" stroke-width="1.1"/><circle cx="8" cy="8.9" r="1.3" fill="#282828"/></svg>
<div style="left:1848.5px;top:108px;width:11px;height:11px;background:#e8e8e8;border-radius:1.5px;"></div>
<svg style="left:1848.5px;top:108px;" width="11" height="11" viewBox="0 0 11 11"><path d="M2.2 5.6L4.5 8.1L8.9 2.9" fill="none" stroke="#1c1c1c" stroke-width="1.9" stroke-linecap="round" stroke-linejoin="round"/></svg>
<svg style="left:1866.5px;top:106px;" width="16" height="16" viewBox="0 0 16 16"><path d="M2.2 6.8C5 11.2 11 11.2 13.8 6.8" fill="none" stroke="#505050" stroke-width="1.1" stroke-linecap="round"/></svg>
<svg style="left:1887.25px;top:106.25px;" width="14.5" height="14.5" viewBox="0 0 16 16"><path d="M1 4.6H4.2L5.2 2.6H10.8L11.8 4.6H15V13.6H1Z" fill="#e0e0e0" stroke="#e0e0e0" stroke-width="0.8" stroke-linejoin="round"/><circle cx="8" cy="8.9" r="3.3" fill="none" stroke="#282828" stroke-width="1.1"/><circle cx="8" cy="8.9" r="1.3" fill="#282828"/></svg>
<svg style="left:1867.25px;top:126.45px;" width="14.5" height="14.5" viewBox="0 0 16 16"><path d="M0.8 8C3.6 2.4 12.4 2.4 15.2 8C12.4 13.6 3.6 13.6 0.8 8Z" fill="#e6e6e6"/><circle cx="8" cy="8" r="3.1" fill="#282828"/><circle cx="8" cy="8" r="1.5" fill="#e6e6e6"/></svg>
<svg style="left:1887.25px;top:126.45px;" width="14.5" height="14.5" viewBox="0 0 16 16"><path d="M1 4.6H4.2L5.2 2.6H10.8L11.8 4.6H15V13.6H1Z" fill="#e0e0e0" stroke="#e0e0e0" stroke-width="0.8" stroke-linejoin="round"/><circle cx="8" cy="8.9" r="3.3" fill="none" stroke="#282828" stroke-width="1.1"/><circle cx="8" cy="8.9" r="1.3" fill="#282828"/></svg>
<div style="left:1848.5px;top:148.4px;width:11px;height:11px;background:#e8e8e8;border-radius:1.5px;"></div>
<svg style="left:1848.5px;top:148.4px;" width="11" height="11" viewBox="0 0 11 11"><path d="M2.2 5.6L4.5 8.1L8.9 2.9" fill="none" stroke="#1c1c1c" stroke-width="1.9" stroke-linecap="round" stroke-linejoin="round"/></svg>
<svg style="left:1866.5px;top:146.4px;" width="16" height="16" viewBox="0 0 16 16"><path d="M2.2 6.8C5 11.2 11 11.2 13.8 6.8" fill="none" stroke="#505050" stroke-width="1.1" stroke-linecap="round"/></svg>
<svg style="left:1887.25px;top:146.65px;" width="14.5" height="14.5" viewBox="0 0 16 16"><path d="M1 4.6H4.2L5.2 2.6H10.8L11.8 4.6H15V13.6H1Z" fill="#e0e0e0" stroke="#e0e0e0" stroke-width="0.8" stroke-linejoin="round"/><circle cx="8" cy="8.9" r="3.3" fill="none" stroke="#282828" stroke-width="1.1"/><circle cx="8" cy="8.9" r="1.3" fill="#282828"/></svg>
<div style="left:1848.5px;top:168.6px;width:11px;height:11px;background:#e8e8e8;border-radius:1.5px;"></div>
<svg style="left:1848.5px;top:168.6px;" width="11" height="11" viewBox="0 0 11 11"><path d="M2.2 5.6L4.5 8.1L8.9 2.9" fill="none" stroke="#1c1c1c" stroke-width="1.9" stroke-linecap="round" stroke-linejoin="round"/></svg>
<svg style="left:1866.5px;top:166.6px;" width="16" height="16" viewBox="0 0 16 16"><path d="M2.2 6.8C5 11.2 11 11.2 13.8 6.8" fill="none" stroke="#505050" stroke-width="1.1" stroke-linecap="round"/></svg>
<svg style="left:1887.25px;top:166.85px;" width="14.5" height="14.5" viewBox="0 0 16 16"><path d="M1 4.6H4.2L5.2 2.6H10.8L11.8 4.6H15V13.6H1Z" fill="#e0e0e0" stroke="#e0e0e0" stroke-width="0.8" stroke-linejoin="round"/><circle cx="8" cy="8.9" r="3.3" fill="none" stroke="#282828" stroke-width="1.1"/><circle cx="8" cy="8.9" r="1.3" fill="#282828"/></svg>
<div style="left:1520px;top:313px;width:393px;height:662.5px;background:#303030;border-radius:5px 0px 0px 5px;"></div>
<div style="left:1520px;top:338px;width:28px;height:637.5px;background:#1e1e1e;border-radius:0px 0px 0px 5px;"></div>
<div style="left:1524px;top:374px;width:24px;height:1px;background:#181818;"></div>
<div style="left:1524px;top:524.5px;width:24px;height:1px;background:#181818;"></div>
<div style="left:1522px;top:638px;width:26.5px;height:31px;background:#303030;border-radius:4px 0px 0px 4px;"></div>
<div style="left:1528px;top:315.5px;width:31.5px;height:19px;background:#282828;border-radius:4px;border:1px solid #3d3d3d;"></div>
<svg style="left:1532px;top:317px;" width="16" height="16" viewBox="0 0 16 16"><g fill="#e6e6e6"><rect x="1.5" y="2" width="13" height="5.4" rx="2.7"/><rect x="1.5" y="8.8" width="13" height="5.4" rx="2.7"/></g><circle cx="11.5" cy="4.7" r="1.8" fill="#303030"/><circle cx="4.5" cy="11.5" r="1.8" fill="#303030"/></svg>
<svg style="left:1549.05px;top:322.975px;" width="7.9" height="5.05" viewBox="0 0 7.9 5.05"><path d="M1 1 L3.95 4.05 L6.9 1" fill="none" stroke="#e6e6e6" stroke-width="1.3" stroke-linecap="round" stroke-linejoin="round"/></svg>
<div style="left:1658.5px;top:315.5px;width:117.5px;height:19px;background:#1d1d1d;border-radius:4px;border:1px solid #3d3d3d;"></div>
<svg style="left:1662px;top:317px;" width="16" height="16" viewBox="0 0 16 16"><circle cx="9.5" cy="6.5" r="4.2" fill="none" stroke="#e6e6e6" stroke-width="1.3"/><path d="M6.5 9.6L2 14" stroke="#e6e6e6" stroke-width="1.5" stroke-linecap="round"/></svg>
<span style="left:1684.00px;top:317.45px;line-height:16px;font-size:12px;color:#808080;letter-spacing:-0.505px;">Search</span>
<div style="left:1886px;top:315.5px;width:19px;height:19px;background:#282828;border-radius:4px;border:1px solid #3d3d3d;"></div>
<svg style="left:1891.55px;top:322.975px;" width="7.9" height="5.05" viewBox="0 0 7.9 5.05"><path d="M1 1 L3.95 4.05 L6.9 1" fill="none" stroke="#e6e6e6" stroke-width="1.3" stroke-linecap="round" stroke-linejoin="round"/></svg>
<svg style="left:1527px;top:352px;" width="16" height="16" viewBox="0 0 16 16"><path d="M4.2 1.5V7.5" stroke="#c4c4c4" stroke-width="1.3" fill="none"/><path d="M2.2 8H6.2V9.2Q6.8 10 6.8 11.2Q6.8 14 4.2 14Q1.6 14 1.6 11.2Q1.6 10 2.2 9.2Z" fill="#c4c4c4"/><path d="M9 1.8Q8 5.5 10.7 6.6V13Q10.7 14.3 11.8 14.3Q12.9 14.3 12.9 13V6.6Q15.6 5.5 14.6 1.8L13.3 1.8V4.3L11.8 5L10.3 4.3V1.8Z" fill="#c4c4c4"/></svg>
<svg style="left:1527px;top:388px;" width="16" height="16" viewBox="0 0 16 16"><path d="M1.2 5.2Q1.2 4.2 2.2 4.2H4V3Q4 2 5 2H8.5Q9.5 2 9.5 3V4.2H13.8Q14.8 4.2 14.8 5.2V13Q14.8 14 13.8 14H2.2Q1.2 14 1.2 13Z" fill="#c4c4c4"/><rect x="5.3" y="3" width="2.9" height="1.3" fill="#1e1e1e"/><path d="M3 6.6H9.5M3 8.6H9.5M3 10.6H9.5" stroke="#1e1e1e" stroke-width="1"/><rect x="11" y="6" width="2.2" height="2.2" fill="#1e1e1e"/><rect x="11" y="9.8" width="2.2" height="2.2" fill="#1e1e1e"/><rect x="11.5" y="1.5" width="2.5" height="1" fill="#c4c4c4"/></svg>
<svg style="left:1527px;top:416px;" width="16" height="16" viewBox="0 0 16 16"><path d="M1 3.5Q1 2 2.5 2H13.5Q15 2 15 3.5V8.5H12.8V6H3.2V8.5H1Z" fill="#c4c4c4"/><rect x="4.2" y="6.8" width="7.6" height="7.6" fill="#9a9a9a"/><path d="M5.2 12.8L7.6 9.4L9.3 11.5L10 10.8L10.9 12.8Z" fill="#1e1e1e"/><rect x="9.5" y="8" width="1.4" height="1.4" fill="#1e1e1e"/></svg>
<svg style="left:1527px;top:444px;" width="16" height="16" viewBox="0 0 16 16"><g fill="none" stroke="#c4c4c4" stroke-width="1"><path d="M1.5 5.5V14.5H10.5M3.4 3.8V12.6H12.3"/><rect x="5.4" y="1.6" width="9.2" height="9.2"/></g><path d="M6.2 10.2L9 4.8L11 8.4L12 7.2L13.9 10.2Z" fill="#c4c4c4"/><rect x="11.6" y="3" width="1.7" height="1.7" fill="#c4c4c4"/></svg>
<svg style="left:1527px;top:472px;" width="16" height="16" viewBox="0 0 16 16"><path d="M5.5 1.5L9.2 10.5Q6 13 1.2 10.8Z" fill="#c4c4c4"/><circle cx="12.8" cy="3.6" r="1.9" fill="#c4c4c4"/><circle cx="11" cy="11" r="3.6" fill="#1e1e1e" stroke="#c4c4c4" stroke-width="1.2"/><path d="M9.3 10.2Q9.8 9 11 8.8" stroke="#c4c4c4" stroke-width="0.9" fill="none"/></svg>
<svg style="left:1527px;top:500px;" width="16" height="16" viewBox="0 0 16 16"><circle cx="8" cy="8" r="5.8" fill="none" stroke="#c87272" stroke-width="1.2"/><path d="M4 4.6Q6.6 3.4 8 5.2Q9.3 6.8 8 8.2Q6.4 9.8 7.8 12.6Q5 12.4 3.4 9.6Q2.6 6.6 4 4.6ZM10.2 3.6Q12.6 4.6 13.2 7.2L10.8 7.8Q9.2 5.8 10.2 3.6Z" fill="#c87272"/><path d="M1 13.2L15 2.8" stroke="#c87272" stroke-width="1" fill="none"/></svg>
<svg style="left:1527px;top:536px;" width="16" height="16" viewBox="0 0 16 16"><rect x="4" y="4" width="8" height="8" fill="#d6a055"/><path d="M1.2 4.4V1.2H4.4M11.6 1.2H14.8V4.4M14.8 11.6V14.8H11.6M4.4 14.8H1.2V11.6" fill="none" stroke="#c88c46" stroke-width="1.1"/></svg>
<svg style="left:1527px;top:564px;" width="16" height="16" viewBox="0 0 16 16"><circle cx="7" cy="8.8" r="2.8" fill="#5585d8"/><path d="M11 4.2A6.2 6.2 0 1 0 13.2 10.5" fill="none" stroke="#5585d8" stroke-width="1.2" stroke-linecap="round"/><circle cx="13" cy="3.6" r="1.6" fill="#5585d8"/></svg>
<svg style="left:1527px;top:593px;" width="16" height="16" viewBox="0 0 16 16"><path d="M13.6 2.4Q14.6 2.6 14.4 4L13.6 7.4L8.4 13.6Q5.4 15.6 2.6 13Q0.6 10 3 7L8.8 2.8Z" fill="none" stroke="#5585d8" stroke-width="1.2" stroke-linejoin="round"/><circle cx="6.3" cy="9.7" r="3" fill="none" stroke="#5585d8" stroke-width="1.2"/><circle cx="6.3" cy="9.7" r="1.2" fill="#5585d8"/></svg>
<svg style="left:1527px;top:620.5px;" width="16" height="16" viewBox="0 0 16 16"><circle cx="9" cy="2.8" r="1.5" fill="#3a7cc4"/><path d="M2 2.4L5.8 6.4L10.6 5.8L14.4 8M8 6.2L7.4 10M7.4 10L3 15M7.4 10L11 11.4L13.4 14.4" fill="none" stroke="#3a7cc4" stroke-width="1.2" stroke-linecap="round" stroke-linejoin="round"/></svg>
<svg style="left:1527px;top:648px;" width="16" height="16" viewBox="0 0 16 16"><path d="M4.6 4.6L11.4 11.4" stroke="#4f84d4" stroke-width="3.1" fill="none"/><g fill="#4f84d4"><ellipse cx="5.4" cy="2.8" rx="1.7" ry="2"/><ellipse cx="2.8" cy="5.4" rx="2" ry="1.7"/><ellipse cx="13.2" cy="10.6" rx="2" ry="1.7"/><ellipse cx="10.6" cy="13.2" rx="1.7" ry="2"/></g></svg>
<svg style="left:1527px;top:676px;" width="16" height="16" viewBox="0 0 16 16"><path d="M5 7.6L11.6 13.8M6 6.6L12.6 12.8" stroke="#4f84d4" stroke-width="1.6" fill="none"/><circle cx="4.8" cy="6.4" r="1.5" fill="#4f84d4"/><circle cx="12.6" cy="13.8" r="1.5" fill="#4f84d4"/><path d="M4.6 11.4Q2.6 6 6.6 3.6Q11.4 1.6 13.6 6.2Q14.4 8.6 13.4 10.4" fill="none" stroke="#4f84d4" stroke-width="1.2"/><path d="M1 2.6H5M3 0.6V4.6" stroke="#4f84d4" stroke-width="1.2"/></svg>
<svg style="left:1557.5px;top:348px;" width="16" height="16" viewBox="0 0 16 16"><rect x="4.5" y="4.5" width="7" height="7" fill="#e6e6e6"/><path d="M1.5 4.5V1.5H4.5M11.5 1.5H14.5V4.5M14.5 11.5V14.5H11.5M4.5 14.5H1.5V11.5" fill="none" stroke="#e6e6e6" stroke-width="1.1"/></svg>
<span style="left:1582.00px;top:348.45px;line-height:16px;font-size:12px;color:#e6e6e6;letter-spacing:-0.127px;">Armat...</span>
<svg style="left:1632.6px;top:351.2px;" width="5.8" height="9.6" viewBox="0 0 5.8 9.6"><path d="M1 1 L4.8 4.8 L1 8.6" fill="none" stroke="#c8c8c8" stroke-width="1.3" stroke-linecap="round" stroke-linejoin="round"/></svg>
<svg style="left:1647px;top:348px;" width="16" height="16" viewBox="0 0 16 16"><circle cx="8.5" cy="3" r="1.4" fill="#e6e6e6"/><path d="M2.5 3L6 6.5L10.5 6L14 7.5M8 6.3L7.5 10M7.5 10L3.5 14.5M7.5 10L11 11.5L13 14" fill="none" stroke="#e6e6e6" stroke-width="1.2" stroke-linecap="round" stroke-linejoin="round"/></svg>
<span style="left:1671.00px;top:348.45px;line-height:16px;font-size:12px;color:#e6e6e6;letter-spacing:-0.127px;">Armat...</span>
<svg style="left:1721.6px;top:351.2px;" width="5.8" height="9.6" viewBox="0 0 5.8 9.6"><path d="M1 1 L4.8 4.8 L1 8.6" fill="none" stroke="#c8c8c8" stroke-width="1.3" stroke-linecap="round" stroke-linejoin="round"/></svg>
<svg style="left:1735.5px;top:348px;" width="16" height="16" viewBox="0 0 16 16"><path d="M4.6 4.6L11.4 11.4" stroke="#e6e6e6" stroke-width="3.1" fill="none"/><g fill="#e6e6e6"><ellipse cx="5.4" cy="2.8" rx="1.7" ry="2"/><ellipse cx="2.8" cy="5.4" rx="2" ry="1.7"/><ellipse cx="13.2" cy="10.6" rx="2" ry="1.7"/><ellipse cx="10.6" cy="13.2" rx="1.7" ry="2"/></g></svg>
<span style="left:1760.00px;top:348.45px;line-height:16px;font-size:12px;color:#e6e6e6;letter-spacing:-0.465px;">CTRL_Avatar_Uppe...</span>
<svg style="left:1888px;top:348px;" width="16" height="16" viewBox="0 0 16 16"><path d="M9.5 2L14 6.5L12.5 7L10.5 9L10 12L4 6L7 5.5L9 3.5Z M6.5 9.5L2 14" fill="none" stroke="#b8b8b8" stroke-width="1.1" stroke-linejoin="round" stroke-linecap="round"/></svg>
<svg style="left:1558px;top:384px;" width="16" height="16" viewBox="0 0 16 16"><path d="M4.6 4.6L11.4 11.4" stroke="#e6e6e6" stroke-width="3.1" fill="none"/><g fill="#e6e6e6"><ellipse cx="5.4" cy="2.8" rx="1.7" ry="2"/><ellipse cx="2.8" cy="5.4" rx="2" ry="1.7"/><ellipse cx="13.2" cy="10.6" rx="2" ry="1.7"/><ellipse cx="10.6" cy="13.2" rx="1.7" ry="2"/></g></svg>
<div style="left:1584.5px;top:383px;width:320.5px;height:18px;background:#1d1d1d;border-radius:4px;"></div>
<span style="left:1592.00px;top:384.45px;line-height:16px;font-size:12px;color:#e6e6e6;letter-spacing:-0.390px;">CTRL_Avatar_UpperBody</span>
<div style="left:1556.2px;top:412px;width:349.3px;height:255px;background:#3d3d3d;border-radius:5px;"></div>
<svg style="left:1564px;top:422.25px;" width="11" height="6.5" viewBox="0 0 11 6.5"><path d="M1 1 L5.5 5.5 L10 1" fill="none" stroke="#e6e6e6" stroke-width="1.3" stroke-linecap="round" stroke-linejoin="round"/></svg>
<span style="left:1578.00px;top:417.45px;line-height:16px;font-size:12px;color:#e6e6e6;letter-spacing:-0.026px;">Transform</span>
<svg style="left:1889px;top:422.5px;" width="12" height="6" viewBox="0 0 12 6"><rect x="0" y="0" width="1.4" height="1.4" fill="#8c8c8c"/><rect x="0" y="3.4" width="1.4" height="1.4" fill="#8c8c8c"/><rect x="3" y="0" width="1.4" height="1.4" fill="#8c8c8c"/><rect x="3" y="3.4" width="1.4" height="1.4" fill="#8c8c8c"/><rect x="6" y="0" width="1.4" height="1.4" fill="#8c8c8c"/><rect x="6" y="3.4" width="1.4" height="1.4" fill="#8c8c8c"/><rect x="9" y="0" width="1.4" height="1.4" fill="#8c8c8c"/><rect x="9" y="3.4" width="1.4" height="1.4" fill="#8c8c8c"/></svg>
<div style="left:1695px;top:446px;width:162px;height:17.8px;background:#85762b;border-radius:4px 4px 0px 0px;"></div>
<span style="left:1627.78px;top:447.35px;line-height:16px;font-size:12px;color:#e6e6e6;">Location X</span>
<span style="left:1765.99px;top:447.35px;line-height:16px;font-size:12px;color:#ffffff;text-shadow:0 1px 1px rgba(0,0,0,.75),0 0 2px rgba(0,0,0,.6);">0 m</span>
<svg style="left:1859.7px;top:446.3px;" width="16" height="16" viewBox="0 0 16 16"><g fill="none" stroke="#b4b4b4" stroke-width="1.2"><path d="M1.3 6.2A3.2 3.2 0 0 1 7.6 5.6V7.6" stroke-linecap="round"/><rect x="6.2" y="7.6" width="8.4" height="5.6" rx="0.6"/></g><rect x="9.9" y="9.2" width="1" height="2.4" fill="#b4b4b4"/></svg>
<svg style="left:1882.6px;top:448.6px;" width="12" height="12" viewBox="0 0 12 12"><path d="M6 0.3L11.7 6L6 11.7L0.3 6Z" fill="#e8e8e8"/></svg>
<div style="left:1695px;top:465.2px;width:162px;height:18.4px;background:#85762b;"></div>
<span style="left:1676.48px;top:466.85px;line-height:16px;font-size:12px;color:#e6e6e6;">Y</span>
<span style="left:1748.98px;top:466.85px;line-height:16px;font-size:12px;color:#ffffff;text-shadow:0 1px 1px rgba(0,0,0,.75),0 0 2px rgba(0,0,0,.6);">-1.4889 m</span>
<svg style="left:1859.7px;top:465.8px;" width="16" height="16" viewBox="0 0 16 16"><g fill="none" stroke="#b4b4b4" stroke-width="1.2"><path d="M1.3 6.2A3.2 3.2 0 0 1 7.6 5.6V7.6" stroke-linecap="round"/><rect x="6.2" y="7.6" width="8.4" height="5.6" rx="0.6"/></g><rect x="9.9" y="9.2" width="1" height="2.4" fill="#b4b4b4"/></svg>
<svg style="left:1882.6px;top:468.1px;" width="12" height="12" viewBox="0 0 12 12"><path d="M6 0.3L11.7 6L6 11.7L0.3 6Z" fill="#e8e8e8"/></svg>
<div style="left:1695px;top:485.2px;width:162px;height:18.8px;background:#85762b;border-radius:0px 0px 4px 4px;"></div>
<span style="left:1677.16px;top:487.05px;line-height:16px;font-size:12px;color:#e6e6e6;">Z</span>
<span style="left:1765.99px;top:487.05px;line-height:16px;font-size:12px;color:#ffffff;text-shadow:0 1px 1px rgba(0,0,0,.75),0 0 2px rgba(0,0,0,.6);">0 m</span>
<svg style="left:1859.7px;top:486px;" width="16" height="16" viewBox="0 0 16 16"><g fill="none" stroke="#b4b4b4" stroke-width="1.2"><path d="M1.3 6.2A3.2 3.2 0 0 1 7.6 5.6V7.6" stroke-linecap="round"/><rect x="6.2" y="7.6" width="8.4" height="5.6" rx="0.6"/></g><rect x="9.9" y="9.2" width="1" height="2.4" fill="#b4b4b4"/></svg>
<svg style="left:1882.6px;top:488.3px;" width="12" height="12" viewBox="0 0 12 12"><path d="M6 0.3L11.7 6L6 11.7L0.3 6Z" fill="#e8e8e8"/></svg>
<div style="left:1695px;top:510.9px;width:162px;height:17.8px;background:#85762b;border-radius:4px 4px 0px 0px;"></div>
<span style="left:1628.45px;top:512.25px;line-height:16px;font-size:12px;color:#e6e6e6;">Rotation X</span>
<span style="left:1770.26px;top:512.25px;line-height:16px;font-size:12px;color:#ffffff;text-shadow:0 1px 1px rgba(0,0,0,.75),0 0 2px rgba(0,0,0,.6);">0°</span>
<svg style="left:1859.7px;top:511.2px;" width="16" height="16" viewBox="0 0 16 16"><g fill="none" stroke="#b4b4b4" stroke-width="1.2"><path d="M1.3 6.2A3.2 3.2 0 0 1 7.6 5.6V7.6" stroke-linecap="round"/><rect x="6.2" y="7.6" width="8.4" height="5.6" rx="0.6"/></g><rect x="9.9" y="9.2" width="1" height="2.4" fill="#b4b4b4"/></svg>
<svg style="left:1882.6px;top:513.5px;" width="12" height="12" viewBox="0 0 12 12"><path d="M6 0.3L11.7 6L6 11.7L0.3 6Z" fill="#e8e8e8"/></svg>
<div style="left:1695px;top:530.1px;width:162px;height:18.4px;background:#85762b;"></div>
<span style="left:1676.48px;top:531.75px;line-height:16px;font-size:12px;color:#e6e6e6;">Y</span>
<span style="left:1770.26px;top:531.75px;line-height:16px;font-size:12px;color:#ffffff;text-shadow:0 1px 1px rgba(0,0,0,.75),0 0 2px rgba(0,0,0,.6);">0°</span>
<svg style="left:1859.7px;top:530.7px;" width="16" height="16" viewBox="0 0 16 16"><g fill="none" stroke="#b4b4b4" stroke-width="1.2"><path d="M1.3 6.2A3.2 3.2 0 0 1 7.6 5.6V7.6" stroke-linecap="round"/><rect x="6.2" y="7.6" width="8.4" height="5.6" rx="0.6"/></g><rect x="9.9" y="9.2" width="1" height="2.4" fill="#b4b4b4"/></svg>
<svg style="left:1882.6px;top:533px;" width="12" height="12" viewBox="0 0 12 12"><path d="M6 0.3L11.7 6L6 11.7L0.3 6Z" fill="#e8e8e8"/></svg>
<div style="left:1695px;top:550.1px;width:162px;height:18.8px;background:#85762b;border-radius:0px 0px 4px 4px;"></div>
<span style="left:1677.16px;top:551.95px;line-height:16px;font-size:12px;color:#e6e6e6;">Z</span>
<span style="left:1770.26px;top:551.95px;line-height:16px;font-size:12px;color:#ffffff;text-shadow:0 1px 1px rgba(0,0,0,.75),0 0 2px rgba(0,0,0,.6);">0°</span>
<svg style="left:1859.7px;top:550.9px;" width="16" height="16" viewBox="0 0 16 16"><g fill="none" stroke="#b4b4b4" stroke-width="1.2"><path d="M1.3 6.2A3.2 3.2 0 0 1 7.6 5.6V7.6" stroke-linecap="round"/><rect x="6.2" y="7.6" width="8.4" height="5.6" rx="0.6"/></g><rect x="9.9" y="9.2" width="1" height="2.4" fill="#b4b4b4"/></svg>
<svg style="left:1882.6px;top:553.2px;" width="12" height="12" viewBox="0 0 12 12"><path d="M6 0.3L11.7 6L6 11.7L0.3 6Z" fill="#e8e8e8"/></svg>
<span style="left:1654.47px;top:577.45px;line-height:16px;font-size:12px;color:#e6e6e6;">Mode</span>
<div style="left:1695px;top:576.2px;width:162px;height:17.7px;background:#282828;border-radius:4px;"></div>
<span style="left:1702.00px;top:577.45px;line-height:16px;font-size:12px;color:#e6e6e6;letter-spacing:-0.299px;">XYZ Euler</span>
<svg style="left:1846.55px;top:582.975px;" width="7.9" height="5.05" viewBox="0 0 7.9 5.05"><path d="M1 1 L3.95 4.05 L6.9 1" fill="none" stroke="#e6e6e6" stroke-width="1.3" stroke-linecap="round" stroke-linejoin="round"/></svg>
<svg style="left:1886px;top:583px;" width="4" height="4" viewBox="0 0 4 4"><circle cx="2" cy="2" r="1.7" fill="#e6e6e6"/></svg>
<div style="left:1695px;top:601px;width:162px;height:17.8px;background:#85762b;border-radius:4px 4px 0px 0px;"></div>
<span style="left:1643.14px;top:602.35px;line-height:16px;font-size:12px;color:#e6e6e6;">Scale X</span>
<span style="left:1760.98px;top:602.35px;line-height:16px;font-size:12px;color:#ffffff;text-shadow:0 1px 1px rgba(0,0,0,.75),0 0 2px rgba(0,0,0,.6);">1.000</span>
<svg style="left:1859.7px;top:601.3px;" width="16" height="16" viewBox="0 0 16 16"><g fill="none" stroke="#b4b4b4" stroke-width="1.2"><path d="M1.3 6.2A3.2 3.2 0 0 1 7.6 5.6V7.6" stroke-linecap="round"/><rect x="6.2" y="7.6" width="8.4" height="5.6" rx="0.6"/></g><rect x="9.9" y="9.2" width="1" height="2.4" fill="#b4b4b4"/></svg>
<svg style="left:1882.6px;top:603.6px;" width="12" height="12" viewBox="0 0 12 12"><path d="M6 0.3L11.7 6L6 11.7L0.3 6Z" fill="#e8e8e8"/></svg>
<div style="left:1695px;top:620.2px;width:162px;height:18.4px;background:#85762b;"></div>
<span style="left:1676.48px;top:621.85px;line-height:16px;font-size:12px;color:#e6e6e6;">Y</span>
<span style="left:1760.98px;top:621.85px;line-height:16px;font-size:12px;color:#ffffff;text-shadow:0 1px 1px rgba(0,0,0,.75),0 0 2px rgba(0,0,0,.6);">1.000</span>
<svg style="left:1859.7px;top:620.8px;" width="16" height="16" viewBox="0 0 16 16"><g fill="none" stroke="#b4b4b4" stroke-width="1.2"><path d="M1.3 6.2A3.2 3.2 0 0 1 7.6 5.6V7.6" stroke-linecap="round"/><rect x="6.2" y="7.6" width="8.4" height="5.6" rx="0.6"/></g><rect x="9.9" y="9.2" width="1" height="2.4" fill="#b4b4b4"/></svg>
<svg style="left:1882.6px;top:623.1px;" width="12" height="12" viewBox="0 0 12 12"><path d="M6 0.3L11.7 6L6 11.7L0.3 6Z" fill="#e8e8e8"/></svg>
<div style="left:1695px;top:640.2px;width:162px;height:18.8px;background:#85762b;border-radius:0px 0px 4px 4px;"></div>
<span style="left:1677.16px;top:642.05px;line-height:16px;font-size:12px;color:#e6e6e6;">Z</span>
<span style="left:1760.98px;top:642.05px;line-height:16px;font-size:12px;color:#ffffff;text-shadow:0 1px 1px rgba(0,0,0,.75),0 0 2px rgba(0,0,0,.6);">1.000</span>
<svg style="left:1859.7px;top:641px;" width="16" height="16" viewBox="0 0 16 16"><g fill="none" stroke="#b4b4b4" stroke-width="1.2"><path d="M1.3 6.2A3.2 3.2 0 0 1 7.6 5.6V7.6" stroke-linecap="round"/><rect x="6.2" y="7.6" width="8.4" height="5.6" rx="0.6"/></g><rect x="9.9" y="9.2" width="1" height="2.4" fill="#b4b4b4"/></svg>
<svg style="left:1882.6px;top:643.3px;" width="12" height="12" viewBox="0 0 12 12"><path d="M6 0.3L11.7 6L6 11.7L0.3 6Z" fill="#e8e8e8"/></svg>
<div style="left:1556.2px;top:670px;width:349.3px;height:24.5px;background:#3d3d3d;border-radius:5px;"></div>
<svg style="left:1566.5px;top:677.5px;" width="6" height="10" viewBox="0 0 6 10"><path d="M1 1 L5 5 L1 9" fill="none" stroke="#e6e6e6" stroke-width="1.3" stroke-linecap="round" stroke-linejoin="round"/></svg>
<span style="left:1578.00px;top:675.45px;line-height:16px;font-size:12px;color:#e6e6e6;letter-spacing:-0.308px;">Bendy Bones</span>
<svg style="left:1889px;top:680px;" width="12" height="6" viewBox="0 0 12 6"><rect x="0" y="0" width="1.4" height="1.4" fill="#8c8c8c"/><rect x="0" y="3.4" width="1.4" height="1.4" fill="#8c8c8c"/><rect x="3" y="0" width="1.4" height="1.4" fill="#8c8c8c"/><rect x="3" y="3.4" width="1.4" height="1.4" fill="#8c8c8c"/><rect x="6" y="0" width="1.4" height="1.4" fill="#8c8c8c"/><rect x="6" y="3.4" width="1.4" height="1.4" fill="#8c8c8c"/><rect x="9" y="0" width="1.4" height="1.4" fill="#8c8c8c"/><rect x="9" y="3.4" width="1.4" height="1.4" fill="#8c8c8c"/></svg>
<div style="left:1556.2px;top:697px;width:349.3px;height:242px;background:#3d3d3d;border-radius:5px;"></div>
<svg style="left:1564px;top:707.25px;" width="11" height="6.5" viewBox="0 0 11 6.5"><path d="M1 1 L5.5 5.5 L10 1" fill="none" stroke="#e6e6e6" stroke-width="1.3" stroke-linecap="round" stroke-linejoin="round"/></svg>
<span style="left:1578.00px;top:702.45px;line-height:16px;font-size:12px;color:#e6e6e6;letter-spacing:-0.226px;">Relations</span>
<svg style="left:1889px;top:707.5px;" width="12" height="6" viewBox="0 0 12 6"><rect x="0" y="0" width="1.4" height="1.4" fill="#8c8c8c"/><rect x="0" y="3.4" width="1.4" height="1.4" fill="#8c8c8c"/><rect x="3" y="0" width="1.4" height="1.4" fill="#8c8c8c"/><rect x="3" y="3.4" width="1.4" height="1.4" fill="#8c8c8c"/><rect x="6" y="0" width="1.4" height="1.4" fill="#8c8c8c"/><rect x="6" y="3.4" width="1.4" height="1.4" fill="#8c8c8c"/><rect x="9" y="0" width="1.4" height="1.4" fill="#8c8c8c"/><rect x="9" y="3.4" width="1.4" height="1.4" fill="#8c8c8c"/></svg>
<span style="left:1649.14px;top:732.45px;line-height:16px;font-size:12px;color:#e6e6e6;">Parent</span>
<div style="left:1695px;top:731px;width:182px;height:18px;background:#282828;border-radius:4px;"></div>
<svg style="left:1700px;top:733.5px;" width="13" height="13" viewBox="0 0 16 16"><path d="M4.6 4.6L11.4 11.4" stroke="#6e6e6e" stroke-width="3.1" fill="none"/><g fill="#6e6e6e"><ellipse cx="5.4" cy="2.8" rx="1.7" ry="2"/><ellipse cx="2.8" cy="5.4" rx="2" ry="1.7"/><ellipse cx="13.2" cy="10.6" rx="2" ry="1.7"/><ellipse cx="10.6" cy="13.2" rx="1.7" ry="2"/></g></svg>
<span style="left:1720.00px;top:732.45px;line-height:16px;font-size:12px;color:#8c8c8c;letter-spacing:-0.469px;">CTRL_Avatar_Root</span>
<div style="left:1695px;top:756px;width:12px;height:12px;background:#545454;border-radius:2.5px;"></div>
<span style="left:1711.00px;top:754.45px;line-height:16px;font-size:12px;color:#e6e6e6;letter-spacing:-0.170px;">Relative Parenting</span>
<svg style="left:1886px;top:760px;" width="4" height="4" viewBox="0 0 4 4"><circle cx="2" cy="2" r="1.7" fill="#e6e6e6"/></svg>
<div style="left:1695px;top:778px;width:12px;height:12px;background:#4a4a4a;border-radius:2.5px;"></div>
<span style="left:1711.00px;top:776.45px;line-height:16px;font-size:12px;color:#8a8a8a;letter-spacing:-0.005px;">Connected</span>
<svg style="left:1886px;top:782px;" width="4" height="4" viewBox="0 0 4 4"><circle cx="2" cy="2" r="1.7" fill="#5a5a5a"/></svg>
<div style="left:1695px;top:800px;width:12px;height:12px;background:#4772b3;border-radius:2.5px;"></div>
<svg style="left:1695px;top:800px;" width="12" height="12" viewBox="0 0 12 12"><path d="M2.8 6.2L5.1 8.6L9.3 3.5" fill="none" stroke="#fff" stroke-width="1.6" stroke-linecap="round" stroke-linejoin="round"/></svg>
<span style="left:1711.00px;top:798.45px;line-height:16px;font-size:12px;color:#e6e6e6;letter-spacing:-0.028px;">Local Location</span>
<svg style="left:1886px;top:804px;" width="4" height="4" viewBox="0 0 4 4"><circle cx="2" cy="2" r="1.7" fill="#e6e6e6"/></svg>
<div style="left:1695px;top:822px;width:12px;height:12px;background:#4772b3;border-radius:2.5px;"></div>
<svg style="left:1695px;top:822px;" width="12" height="12" viewBox="0 0 12 12"><path d="M2.8 6.2L5.1 8.6L9.3 3.5" fill="none" stroke="#fff" stroke-width="1.6" stroke-linecap="round" stroke-linejoin="round"/></svg>
<span style="left:1711.00px;top:820.45px;line-height:16px;font-size:12px;color:#e6e6e6;letter-spacing:0.163px;">Inherit Rotation</span>
<svg style="left:1886px;top:826px;" width="4" height="4" viewBox="0 0 4 4"><circle cx="2" cy="2" r="1.7" fill="#e6e6e6"/></svg>
<span style="left:1617.80px;top:842.45px;line-height:16px;font-size:12px;color:#e6e6e6;">Inherit Scale</span>
<div style="left:1695px;top:841.5px;width:182px;height:17.5px;background:#282828;border-radius:4px;"></div>
<span style="left:1702.00px;top:842.45px;line-height:16px;font-size:12px;color:#e6e6e6;letter-spacing:0.164px;">Full</span>
<svg style="left:1866.55px;top:847.975px;" width="7.9" height="5.05" viewBox="0 0 7.9 5.05"><path d="M1 1 L3.95 4.05 L6.9 1" fill="none" stroke="#e6e6e6" stroke-width="1.3" stroke-linecap="round" stroke-linejoin="round"/></svg>
<svg style="left:1886px;top:848px;" width="4" height="4" viewBox="0 0 4 4"><circle cx="2" cy="2" r="1.7" fill="#e6e6e6"/></svg>
<div style="left:1556.5px;top:893px;width:349px;height:46px;background:#383838;border-radius:0px 0px 5px 5px;"></div>
<svg style="left:1577.5px;top:878.25px;" width="11" height="6.5" viewBox="0 0 11 6.5"><path d="M1 1 L5.5 5.5 L10 1" fill="none" stroke="#e6e6e6" stroke-width="1.3" stroke-linecap="round" stroke-linejoin="round"/></svg>
<span style="left:1592.00px;top:873.45px;line-height:16px;font-size:12px;color:#e6e6e6;">Bone Collections</span>
<div style="left:1565px;top:902px;width:332px;height:28px;background:#282828;border-radius:4px;border:1px solid #333;"></div>
<span style="left:1570.00px;top:908.45px;line-height:16px;font-size:12px;color:#e6e6e6;letter-spacing:0.048px;">Global/Switch</span>
<svg style="left:1827.75px;top:908.75px;" width="14.5" height="14.5" viewBox="0 0 16 16"><path d="M0.8 8C3.6 2.4 12.4 2.4 15.2 8C12.4 13.6 3.6 13.6 0.8 8Z" fill="#e6e6e6"/><circle cx="8" cy="8" r="3.1" fill="#282828"/><circle cx="8" cy="8" r="1.5" fill="#e6e6e6"/></svg>
<svg style="left:1847px;top:907.5px;" width="16" height="16" viewBox="0 0 16 16"><path d="M8 1.8L9.9 6L14.4 6.4L11 9.4L12 13.9L8 11.5L4 13.9L5 9.4L1.6 6.4L6.1 6Z" fill="none" stroke="#e0e0e0" stroke-width="1.2" stroke-linejoin="round"/></svg>
<svg style="left:1875px;top:908px;" width="16" height="16" viewBox="0 0 16 16"><path d="M3.5 3.5L12.5 12.5M12.5 3.5L3.5 12.5" stroke="#e0e0e0" stroke-width="1.3" stroke-linecap="round"/></svg>
<div style="left:1556.2px;top:941.5px;width:349.3px;height:24.5px;background:#3d3d3d;border-radius:5px;"></div>
<svg style="left:1566.5px;top:948.5px;" width="6" height="10" viewBox="0 0 6 10"><path d="M1 1 L5 5 L1 9" fill="none" stroke="#e6e6e6" stroke-width="1.3" stroke-linecap="round" stroke-linejoin="round"/></svg>
<span style="left:1578.00px;top:946.45px;line-height:16px;font-size:12px;color:#e6e6e6;letter-spacing:-0.076px;">Inverse Kinematics</span>
<svg style="left:1889px;top:951px;" width="12" height="6" viewBox="0 0 12 6"><rect x="0" y="0" width="1.4" height="1.4" fill="#8c8c8c"/><rect x="0" y="3.4" width="1.4" height="1.4" fill="#8c8c8c"/><rect x="3" y="0" width="1.4" height="1.4" fill="#8c8c8c"/><rect x="3" y="3.4" width="1.4" height="1.4" fill="#8c8c8c"/><rect x="6" y="0" width="1.4" height="1.4" fill="#8c8c8c"/><rect x="6" y="3.4" width="1.4" height="1.4" fill="#8c8c8c"/><rect x="9" y="0" width="1.4" height="1.4" fill="#8c8c8c"/><rect x="9" y="3.4" width="1.4" height="1.4" fill="#8c8c8c"/></svg>
<div style="left:1556.5px;top:968.5px;width:349px;height:7px;background:#3d3d3d;border-radius:5px 5px 0px 0px;"></div>
<div style="left:0px;top:688px;width:1517px;height:137px;border-radius:0px 5px 5px 0px;"><div style="left:0px;top:-688px;width:1908px;height:980px;overflow:visible;">
<div style="left:0px;top:688px;width:1517px;height:137px;background:#303030;"></div>
<div style="left:0px;top:714px;width:203.5px;height:111px;background:#1d1d1d;"></div>
<div style="left:203.5px;top:714px;width:1094px;height:111px;background:#2a2a2a;"></div>
<div style="left:203.5px;top:779.5px;width:1094px;height:24.5px;background:#333333;"></div>
<div style="left:203.5px;top:804px;width:1094px;height:21px;background:#2d2d2d;"></div>
<div style="left:203.5px;top:714px;width:113.5px;height:111px;background:rgba(0,0,0,0.22);"></div>
<svg style="left:203.5px;top:0px;" width="1094" height="825" viewBox="0 0 1094 825"><path d="M29.0 736V825" stroke="rgba(0,0,0,0.28)" stroke-width="1"/><path d="M57.0 736V825" stroke="rgba(0,0,0,0.5)" stroke-width="1"/><path d="M85.0 736V825" stroke="rgba(0,0,0,0.28)" stroke-width="1"/><path d="M114.0 736V825" stroke="rgba(0,0,0,0.5)" stroke-width="1"/><path d="M142.0 736V825" stroke="rgba(0,0,0,0.28)" stroke-width="1"/><path d="M170.0 736V825" stroke="rgba(0,0,0,0.5)" stroke-width="1"/><path d="M198.0 736V825" stroke="rgba(0,0,0,0.28)" stroke-width="1"/><path d="M227.0 736V825" stroke="rgba(0,0,0,0.5)" stroke-width="1"/><path d="M255.0 736V825" stroke="rgba(0,0,0,0.28)" stroke-width="1"/><path d="M283.0 736V825" stroke="rgba(0,0,0,0.5)" stroke-width="1"/><path d="M312.0 736V825" stroke="rgba(0,0,0,0.28)" stroke-width="1"/><path d="M340.0 736V825" stroke="rgba(0,0,0,0.5)" stroke-width="1"/><path d="M368.0 736V825" stroke="rgba(0,0,0,0.28)" stroke-width="1"/><path d="M397.0 736V825" stroke="rgba(0,0,0,0.5)" stroke-width="1"/><path d="M425.0 736V825" stroke="rgba(0,0,0,0.28)" stroke-width="1"/><path d="M453.0 736V825" stroke="rgba(0,0,0,0.5)" stroke-width="1"/><path d="M482.0 736V825" stroke="rgba(0,0,0,0.28)" stroke-width="1"/><path d="M510.0 736V825" stroke="rgba(0,0,0,0.5)" stroke-width="1"/><path d="M538.0 736V825" stroke="rgba(0,0,0,0.28)" stroke-width="1"/><path d="M566.0 736V825" stroke="rgba(0,0,0,0.5)" stroke-width="1"/><path d="M595.0 736V825" stroke="rgba(0,0,0,0.28)" stroke-width="1"/><path d="M623.0 736V825" stroke="rgba(0,0,0,0.5)" stroke-width="1"/><path d="M651.0 736V825" stroke="rgba(0,0,0,0.28)" stroke-width="1"/><path d="M680.0 736V825" stroke="rgba(0,0,0,0.5)" stroke-width="1"/><path d="M708.0 736V825" stroke="rgba(0,0,0,0.28)" stroke-width="1"/><path d="M736.0 736V825" stroke="rgba(0,0,0,0.5)" stroke-width="1"/><path d="M764.0 736V825" stroke="rgba(0,0,0,0.28)" stroke-width="1"/><path d="M793.0 736V825" stroke="rgba(0,0,0,0.5)" stroke-width="1"/><path d="M821.0 736V825" stroke="rgba(0,0,0,0.28)" stroke-width="1"/><path d="M849.0 736V825" stroke="rgba(0,0,0,0.5)" stroke-width="1"/><path d="M878.0 736V825" stroke="rgba(0,0,0,0.28)" stroke-width="1"/><path d="M906.0 736V825" stroke="rgba(0,0,0,0.5)" stroke-width="1"/><path d="M934.0 736V825" stroke="rgba(0,0,0,0.28)" stroke-width="1"/><path d="M963.0 736V825" stroke="rgba(0,0,0,0.5)" stroke-width="1"/><path d="M991.0 736V825" stroke="rgba(0,0,0,0.28)" stroke-width="1"/><path d="M1019.0 736V825" stroke="rgba(0,0,0,0.5)" stroke-width="1"/><path d="M1048.0 736V825" stroke="rgba(0,0,0,0.28)" stroke-width="1"/><path d="M1076.0 736V825" stroke="rgba(0,0,0,0.5)" stroke-width="1"/><path d="M0 761.5H1094" stroke="rgba(0,0,0,0.22)" stroke-width="1"/></svg>
<div style="left:203.5px;top:714px;width:1094px;height:22px;background:#1a1a1a;"></div>
<span style="left:423.62px;top:717.45px;line-height:16px;font-size:12px;color:#c0c0c0;">10</span>
<span style="left:536.82px;top:717.45px;line-height:16px;font-size:12px;color:#c0c0c0;">20</span>
<span style="left:650.02px;top:717.45px;line-height:16px;font-size:12px;color:#c0c0c0;">30</span>
<span style="left:763.22px;top:717.45px;line-height:16px;font-size:12px;color:#c0c0c0;">40</span>
<span style="left:876.42px;top:717.45px;line-height:16px;font-size:12px;color:#c0c0c0;">50</span>
<span style="left:989.62px;top:717.45px;line-height:16px;font-size:12px;color:#c0c0c0;">60</span>
<span style="left:1102.82px;top:717.45px;line-height:16px;font-size:12px;color:#c0c0c0;">70</span>
<span style="left:1216.02px;top:717.45px;line-height:16px;font-size:12px;color:#c0c0c0;">80</span>
<div style="left:203.5px;top:791.3px;width:1094px;height:1.5px;background:#3f68ad;"></div>
<span style="left:210.66px;top:783.45px;line-height:16px;font-size:12px;color:#ffffff;text-shadow:0 1px 1px rgba(0,0,0,.75),0 0 2px rgba(0,0,0,.6);">0</span>
<div style="left:316px;top:725px;width:2.2px;height:100px;background:#4772b3;"></div>
<div style="left:305.5px;top:716.5px;width:24px;height:16.5px;background:#4772b3;border-radius:4px;"></div>
<span style="left:314.16px;top:717.45px;line-height:16px;font-size:12px;color:#ffffff;">0</span>
<div style="left:212px;top:815px;width:324px;height:7.5px;background:#545454;border-radius:3.8px;"></div>
<svg style="left:213px;top:815.7px;" width="6" height="6" viewBox="0 0 6 6"><circle cx="3" cy="3" r="2.6" fill="#2a2a2a"/></svg>
<svg style="left:529px;top:815.7px;" width="6" height="6" viewBox="0 0 6 6"><circle cx="3" cy="3" r="2.6" fill="#2a2a2a"/></svg>
<div style="left:1288.05px;top:738px;width:6.5px;height:58px;background:#545454;border-radius:3.25px;"></div>
<svg style="left:1288.55px;top:738.5px;" width="5.5" height="5.5" viewBox="0 0 5.5 5.5"><circle cx="2.75" cy="2.75" r="2.35" fill="#2a2a2a"/></svg>
<svg style="left:1288.55px;top:790px;" width="5.5" height="5.5" viewBox="0 0 5.5 5.5"><circle cx="2.75" cy="2.75" r="2.35" fill="#2a2a2a"/></svg>
<div style="left:0px;top:715px;width:200.5px;height:18.5px;background:#1d1d1d;border-radius:4px;border:1px solid #383838;border-left:none;"></div>
<svg style="left:1px;top:716px;" width="16" height="16" viewBox="0 0 16 16"><circle cx="9.5" cy="6.5" r="4.2" fill="none" stroke="#e6e6e6" stroke-width="1.3"/><path d="M6.5 9.6L2 14" stroke="#e6e6e6" stroke-width="1.5" stroke-linecap="round"/></svg>
<span style="left:22.00px;top:716.45px;line-height:16px;font-size:12px;color:#707070;letter-spacing:-0.505px;">Search</span>
<div style="left:178.5px;top:715px;width:22px;height:18.5px;background:#545454;border-radius:0px 4px 4px 0px;"></div>
<svg style="left:181.5px;top:716px;" width="16" height="16" viewBox="0 0 16 16"><path d="M2 8H14M4.5 5L1.8 8L4.5 11M11.5 5L14.2 8L11.5 11" fill="none" stroke="#e6e6e6" stroke-width="1.2" stroke-linecap="round" stroke-linejoin="round"/></svg>
<div style="left:3px;top:691.5px;width:30.5px;height:18.5px;background:#282828;border-radius:4px;border:1px solid #3d3d3d;"></div>
<svg style="left:6.5px;top:692.5px;" width="16" height="16" viewBox="0 0 16 16"><path d="M1.5 9.5H6C8.5 9.5 9 3.5 12 3.5H14.5" fill="none" stroke="#e6e6e6" stroke-width="1.7" stroke-linecap="round"/><path d="M2.5 3.5Q5 4 6.5 8M5.5 11.5Q8 15 13 11" fill="none" stroke="#e6e6e6" stroke-width="1" stroke-linecap="round"/></svg>
<svg style="left:23.55px;top:698.975px;" width="7.9" height="5.05" viewBox="0 0 7.9 5.05"><path d="M1 1 L3.95 4.05 L6.9 1" fill="none" stroke="#e6e6e6" stroke-width="1.3" stroke-linecap="round" stroke-linejoin="round"/></svg>
<span style="left:46.00px;top:692.95px;line-height:16px;font-size:12px;color:#e6e6e6;letter-spacing:0.051px;">View</span>
<span style="left:87.30px;top:692.95px;line-height:16px;font-size:12px;color:#e6e6e6;letter-spacing:-0.310px;">Select</span>
<span style="left:134.00px;top:692.95px;line-height:16px;font-size:12px;color:#e6e6e6;letter-spacing:-0.224px;">Marker</span>
<span style="left:185.00px;top:692.95px;line-height:16px;font-size:12px;color:#e6e6e6;letter-spacing:-0.100px;">Channel</span>
<span style="left:244.00px;top:692.95px;line-height:16px;font-size:12px;color:#e6e6e6;letter-spacing:-0.562px;">Key</span>
<div style="left:277px;top:692px;width:90px;height:18px;background:#4772b3;border-radius:4px 0px 0px 4px;"></div>
<div style="left:368px;top:692px;width:19px;height:18px;background:#4772b3;border-radius:0px 4px 4px 0px;"></div>
<svg style="left:279.5px;top:693px;" width="16" height="16" viewBox="0 0 16 16"><path d="M1.5 4.5V1.5H4.5M11.5 1.5H14.5V4.5M14.5 11.5V14.5H11.5M4.5 14.5H1.5V11.5" fill="none" stroke="#fff" stroke-width="1.1"/><path d="M3.5 5Q6 4.5 8 10Q9 12 11 11.5L12.5 5" fill="none" stroke="#fff" stroke-width="1.2"/></svg>
<span style="left:304.50px;top:693.45px;line-height:16px;font-size:12px;color:#ffffff;letter-spacing:-0.168px;">Normalize</span>
<svg style="left:370px;top:693px;" width="16" height="16" viewBox="0 0 16 16"><path d="M13 6.5A5.3 5.3 0 0 0 3.2 5.5M3 9.5A5.3 5.3 0 0 0 12.8 10.5" fill="none" stroke="#fff" stroke-width="1.3"/><path d="M13.8 2.5V6.8H9.5M2.2 13.5V9.2H6.5" fill="none" stroke="#fff" stroke-width="1.3"/></svg>
<div style="left:1251px;top:692px;width:58px;height:18px;background:#545454;border-radius:4px;"></div>
<div style="left:1251px;top:692px;width:38.5px;height:18px;background:#4772b3;border-radius:4px 0px 0px 4px;"></div>
<div style="left:1270px;top:692px;width:0.8px;height:18px;background:#3a5e96;"></div>
<svg style="left:1252.5px;top:693px;" width="16" height="16" viewBox="0 0 16 16"><path d="M3.5 2L12.5 8L8.3 8.8L6.3 13Z" fill="#fff"/></svg>
<svg style="left:1272px;top:693px;" width="16" height="16" viewBox="0 0 16 16"><rect x="4.8" y="4.8" width="6.4" height="6.4" fill="none" stroke="#fff" stroke-width="1" stroke-dasharray="1.6 1"/><path d="M1.5 4.5V1.5H4.5M11.5 1.5H14.5V4.5M14.5 11.5V14.5H11.5M4.5 14.5H1.5V11.5" fill="none" stroke="#fff" stroke-width="1.2"/></svg>
<svg style="left:1291px;top:693px;" width="16" height="16" viewBox="0 0 16 16"><path d="M8 1.5L15 14H1Z" fill="#f0f0f0"/><path d="M8 5.5V10" stroke="#545454" stroke-width="1.7"/><circle cx="8" cy="12" r="0.95" fill="#545454"/></svg>
<div style="left:1316px;top:692px;width:18px;height:18px;background:#3a3a3a;border-radius:4px;"></div>
<svg style="left:1317px;top:693px;" width="16" height="16" viewBox="0 0 16 16"><g fill="none" stroke="#5e5e5e" stroke-width="1.1"><rect x="2.5" y="2.5" width="9" height="8"/><path d="M3 10L11 3M1 13H15M12.5 11V15"/></g></svg>
<div style="left:1340px;top:692px;width:31.5px;height:18px;background:#282828;border-radius:4px;border:1px solid #3d3d3d;"></div>
<svg style="left:1343.5px;top:693px;" width="16" height="16" viewBox="0 0 16 16"><path d="M2.5 2.5H13.5L9.3 8V14L6.7 12.5V8Z" fill="none" stroke="#e6e6e6" stroke-width="1.2" stroke-linejoin="round"/></svg>
<svg style="left:1361.05px;top:698.975px;" width="7.9" height="5.05" viewBox="0 0 7.9 5.05"><path d="M1 1 L3.95 4.05 L6.9 1" fill="none" stroke="#e6e6e6" stroke-width="1.3" stroke-linecap="round" stroke-linejoin="round"/></svg>
<div style="left:1377px;top:692px;width:31.5px;height:18px;background:#282828;border-radius:4px;border:1px solid #3d3d3d;"></div>
<svg style="left:1380.5px;top:693px;" width="16" height="16" viewBox="0 0 16 16"><path d="M2 5V2H5M11 2H14V5M14 11V14H11M5 14H2V11" fill="none" stroke="#e6e6e6" stroke-width="1.2"/><circle cx="8" cy="8" r="1.8" fill="#e6e6e6"/></svg>
<svg style="left:1398.55px;top:698.975px;" width="7.9" height="5.05" viewBox="0 0 7.9 5.05"><path d="M1 1 L3.95 4.05 L6.9 1" fill="none" stroke="#e6e6e6" stroke-width="1.3" stroke-linecap="round" stroke-linejoin="round"/></svg>
<div style="left:1415px;top:692px;width:18.5px;height:18px;background:#4772b3;border-radius:4px 0px 0px 4px;"></div>
<svg style="left:1416px;top:693px;" width="16" height="16" viewBox="0 0 16 16"><path d="M4.2 11.8A5.2 5.2 0 1 1 12 11.2L9.8 9.2A2.3 2.3 0 1 0 6.4 9.6Z" fill="#fff"/><path d="M1.5 14.5H4V12.5H6.5" fill="none" stroke="#fff" stroke-width="1"/></svg>
<div style="left:1434px;top:692px;width:19.5px;height:18px;background:#282828;border-radius:0px 4px 4px 0px;"></div>
<svg style="left:1439.55px;top:698.975px;" width="7.9" height="5.05" viewBox="0 0 7.9 5.05"><path d="M1 1 L3.95 4.05 L6.9 1" fill="none" stroke="#e6e6e6" stroke-width="1.3" stroke-linecap="round" stroke-linejoin="round"/></svg>
<div style="left:1459.5px;top:692px;width:18.5px;height:18px;background:#545454;border-radius:4px 0px 0px 4px;"></div>
<svg style="left:1460.7px;top:693px;" width="16" height="16" viewBox="0 0 16 16"><circle cx="8" cy="8" r="5.5" fill="none" stroke="#b0b0b0" stroke-width="1"/><circle cx="8" cy="8" r="1.8" fill="#e0e0e0"/></svg>
<div style="left:1478.5px;top:692px;width:31.5px;height:18px;background:#2b2b2b;border-radius:0px 4px 4px 0px;border:1px solid #3a3a3a;border-left:none;"></div>
<svg style="left:1481px;top:693px;" width="16" height="16" viewBox="0 0 16 16"><path d="M1.5 13.5C6 13.5 6 3 8 3C10 3 10 13.5 14.5 13.5" fill="none" stroke="#5a5a5a" stroke-width="1.1"/></svg>
<svg style="left:1499.55px;top:698.975px;" width="7.9" height="5.05" viewBox="0 0 7.9 5.05"><path d="M1 1 L3.95 4.05 L6.9 1" fill="none" stroke="#5a5a5a" stroke-width="1.3" stroke-linecap="round" stroke-linejoin="round"/></svg>
<div style="left:1306px;top:714px;width:211px;height:111px;background:#303030;border-radius:0px 0px 5px 0px;"></div>
<div style="left:1306px;top:715.2px;width:204px;height:112px;background:#3d3d3d;border-radius:5px 5px 0px 0px;"></div>
<svg style="left:1314px;top:725.25px;" width="11" height="6.5" viewBox="0 0 11 6.5"><path d="M1 1 L5.5 5.5 L10 1" fill="none" stroke="#e6e6e6" stroke-width="1.3" stroke-linecap="round" stroke-linejoin="round"/></svg>
<div style="left:1327px;top:722px;width:12px;height:12px;background:#4772b3;border-radius:2.5px;"></div>
<svg style="left:1327px;top:722px;" width="12" height="12" viewBox="0 0 12 12"><path d="M2.8 6.2L5.1 8.6L9.3 3.5" fill="none" stroke="#fff" stroke-width="1.6" stroke-linecap="round" stroke-linejoin="round"/></svg>
<span style="left:1342.50px;top:720.45px;line-height:16px;font-size:12px;color:#e6e6e6;letter-spacing:-0.124px;">Show Cursor</span>
<svg style="left:1492px;top:725.5px;" width="12" height="6" viewBox="0 0 12 6"><rect x="0" y="0" width="1.4" height="1.4" fill="#8c8c8c"/><rect x="0" y="3.4" width="1.4" height="1.4" fill="#8c8c8c"/><rect x="3" y="0" width="1.4" height="1.4" fill="#8c8c8c"/><rect x="3" y="3.4" width="1.4" height="1.4" fill="#8c8c8c"/><rect x="6" y="0" width="1.4" height="1.4" fill="#8c8c8c"/><rect x="6" y="3.4" width="1.4" height="1.4" fill="#8c8c8c"/><rect x="9" y="0" width="1.4" height="1.4" fill="#8c8c8c"/><rect x="9" y="3.4" width="1.4" height="1.4" fill="#8c8c8c"/></svg>
<span style="left:1336.66px;top:750.45px;line-height:16px;font-size:12px;color:#e6e6e6;">Cursor X</span>
<div style="left:1395px;top:749.5px;width:106px;height:17.5px;background:#545454;border-radius:4px 4px 0px 0px;"></div>
<span style="left:1444.66px;top:750.45px;line-height:16px;font-size:12px;color:#e6e6e6;">0</span>
<span style="left:1375.98px;top:769.95px;line-height:16px;font-size:12px;color:#e6e6e6;">Y</span>
<div style="left:1395px;top:768px;width:106px;height:18.5px;background:#545454;border-radius:0px 0px 4px 4px;"></div>
<span style="left:1432.98px;top:769.95px;line-height:16px;font-size:12px;color:#e6e6e6;">0.000</span>
<div style="left:1315px;top:791px;width:186px;height:18px;background:#464646;border-radius:4px 4px 0px 0px;"></div>
<span style="left:1357.50px;top:792.45px;line-height:16px;font-size:12px;color:#8e8e8e;letter-spacing:-0.055px;">Cursor to Selection</span>
<div style="left:1315px;top:810px;width:186px;height:18px;background:#464646;"></div>
<span style="left:1341.00px;top:811.45px;line-height:16px;font-size:12px;color:#8e8e8e;letter-spacing:-0.048px;">Cursor Value to Selection</span>
<div style="left:1511.5px;top:716px;width:3px;height:85px;background:#484848;border-radius:1.5px;"></div>
</div></div>
<svg style="left:1489px;top:678px;" width="20" height="8" viewBox="0 0 20 8"><path d="M2 8Q2 2 6 2H14Q18 2 18 8Z" fill="#7b7b7b"/><path d="M6.5 6.5L10 3.5L13.5 6.5" fill="none" stroke="#a8a8a8" stroke-width="1.3"/></svg>
<div style="left:0px;top:828px;width:1517px;height:120.5px;border-radius:0px 5px 5px 0px;"><div style="left:0px;top:-828px;width:1908px;height:980px;overflow:visible;">
<div style="left:0px;top:828px;width:1517px;height:120.5px;background:#303030;"></div>
<div style="left:194px;top:853px;width:1104px;height:96px;background:#2b2b2b;"></div>
<div style="left:194px;top:853px;width:283.5px;height:96px;background:#1f1f1f;"></div>
<div style="left:194px;top:877.5px;width:1104px;height:18px;background:#352a2a;"></div>
<div style="left:194px;top:877.5px;width:283.5px;height:18px;background:#2a2020;"></div>
<div style="left:194px;top:896px;width:1104px;height:16px;background:#29384a;"></div>
<div style="left:194px;top:896px;width:283.5px;height:16px;background:#1e2a3a;"></div>
<svg style="left:194px;top:0px;" width="1104" height="949" viewBox="0 0 1104 949"><path d="M34.5 876V949" stroke="rgba(0,0,0,0.5)" stroke-width="1"/><path d="M76.5 876V949" stroke="rgba(0,0,0,0.25)" stroke-width="1"/><path d="M117.5 876V949" stroke="rgba(0,0,0,0.5)" stroke-width="1"/><path d="M159.5 876V949" stroke="rgba(0,0,0,0.25)" stroke-width="1"/><path d="M200.5 876V949" stroke="rgba(0,0,0,0.5)" stroke-width="1"/><path d="M242.5 876V949" stroke="rgba(0,0,0,0.25)" stroke-width="1"/><path d="M284.5 876V949" stroke="rgba(0,0,0,0.5)" stroke-width="1"/><path d="M325.5 876V949" stroke="rgba(0,0,0,0.25)" stroke-width="1"/><path d="M367.5 876V949" stroke="rgba(0,0,0,0.5)" stroke-width="1"/><path d="M408.5 876V949" stroke="rgba(0,0,0,0.25)" stroke-width="1"/><path d="M450.5 876V949" stroke="rgba(0,0,0,0.5)" stroke-width="1"/><path d="M491.5 876V949" stroke="rgba(0,0,0,0.25)" stroke-width="1"/><path d="M533.5 876V949" stroke="rgba(0,0,0,0.5)" stroke-width="1"/><path d="M574.5 876V949" stroke="rgba(0,0,0,0.25)" stroke-width="1"/><path d="M616.5 876V949" stroke="rgba(0,0,0,0.5)" stroke-width="1"/><path d="M657.5 876V949" stroke="rgba(0,0,0,0.25)" stroke-width="1"/><path d="M699.5 876V949" stroke="rgba(0,0,0,0.5)" stroke-width="1"/><path d="M741.5 876V949" stroke="rgba(0,0,0,0.25)" stroke-width="1"/><path d="M782.5 876V949" stroke="rgba(0,0,0,0.5)" stroke-width="1"/><path d="M824.5 876V949" stroke="rgba(0,0,0,0.25)" stroke-width="1"/><path d="M865.5 876V949" stroke="rgba(0,0,0,0.5)" stroke-width="1"/><path d="M907.5 876V949" stroke="rgba(0,0,0,0.25)" stroke-width="1"/><path d="M948.5 876V949" stroke="rgba(0,0,0,0.5)" stroke-width="1"/><path d="M990.5 876V949" stroke="rgba(0,0,0,0.25)" stroke-width="1"/><path d="M1031.5 876V949" stroke="rgba(0,0,0,0.5)" stroke-width="1"/><path d="M1073.5 876V949" stroke="rgba(0,0,0,0.25)" stroke-width="1"/></svg>
<div style="left:194px;top:853px;width:1104px;height:23.5px;background:#1a1a1a;"></div>
<span style="left:220.33px;top:857.95px;line-height:16px;font-size:12px;color:#c0c0c0;">-15</span>
<span style="left:303.43px;top:857.95px;line-height:16px;font-size:12px;color:#c0c0c0;">-10</span>
<span style="left:389.86px;top:857.95px;line-height:16px;font-size:12px;color:#c0c0c0;">-5</span>
<span style="left:557.76px;top:857.95px;line-height:16px;font-size:12px;color:#c0c0c0;">5</span>
<span style="left:637.52px;top:857.95px;line-height:16px;font-size:12px;color:#c0c0c0;">10</span>
<span style="left:720.62px;top:857.95px;line-height:16px;font-size:12px;color:#c0c0c0;">15</span>
<span style="left:803.72px;top:857.95px;line-height:16px;font-size:12px;color:#c0c0c0;">20</span>
<span style="left:886.82px;top:857.95px;line-height:16px;font-size:12px;color:#c0c0c0;">25</span>
<span style="left:969.92px;top:857.95px;line-height:16px;font-size:12px;color:#c0c0c0;">30</span>
<span style="left:1053.02px;top:857.95px;line-height:16px;font-size:12px;color:#c0c0c0;">35</span>
<span style="left:1136.12px;top:857.95px;line-height:16px;font-size:12px;color:#c0c0c0;">40</span>
<span style="left:1219.22px;top:857.95px;line-height:16px;font-size:12px;color:#c0c0c0;">45</span>
<div style="left:0px;top:853px;width:194px;height:96px;background:#1d1d1d;"></div>
<div style="left:0px;top:877.5px;width:194px;height:18px;background:#4a2626;"></div>
<div style="left:0px;top:896px;width:194px;height:16px;background:#1e5080;"></div>
<svg style="left:0.255px;top:881.822px;" width="8.49" height="5.355" viewBox="0 0 8.49 5.355"><path d="M1 1 L4.245 4.355 L7.49 1" fill="none" stroke="#d0d0d0" stroke-width="1.3" stroke-linecap="round" stroke-linejoin="round"/></svg>
<span style="left:14.50px;top:878.45px;line-height:16px;font-size:12px;color:#d8d8d8;letter-spacing:-0.263px;">Summary</span>
<svg style="left:0.255px;top:900.322px;" width="8.49" height="5.355" viewBox="0 0 8.49 5.355"><path d="M1 1 L4.245 4.355 L7.49 1" fill="none" stroke="#d0d0d0" stroke-width="1.3" stroke-linecap="round" stroke-linejoin="round"/></svg>
<svg style="left:11.5px;top:895.5px;" width="16" height="16" viewBox="0 0 16 16"><rect x="4.6" y="1.6" width="6.8" height="4.8" fill="#8e8e8e"/><path d="M2.4 1.4L5 4L2.4 6.6L-0.2 4ZM13.6 1.4L16.2 4L13.6 6.6L11 4Z" fill="#e0e0e0"/><path d="M3.2 8V13H6" fill="none" stroke="#e0e0e0" stroke-width="1"/><rect x="8" y="10.8" width="6.6" height="3.4" fill="#e0e0e0"/></svg>
<span style="left:31.50px;top:896.45px;line-height:16px;font-size:12px;color:#f0b432;letter-spacing:-0.094px;">Avatar_Animation</span>
<svg style="left:177px;top:896px;" width="16" height="16" viewBox="0 0 16 16"><rect x="4.5" y="4.5" width="7" height="7" fill="#c8c8c8"/><path d="M1.5 4.5V1.5H4.5M11.5 1.5H14.5V4.5M14.5 11.5V14.5H11.5M4.5 14.5H1.5V11.5" fill="none" stroke="#c8c8c8" stroke-width="1.1"/></svg>
<div style="left:0px;top:855.5px;width:192px;height:18px;background:#1d1d1d;border-radius:4px;border:1px solid #383838;border-left:none;"></div>
<svg style="left:1px;top:856.5px;" width="16" height="16" viewBox="0 0 16 16"><circle cx="9.5" cy="6.5" r="4.2" fill="none" stroke="#e6e6e6" stroke-width="1.3"/><path d="M6.5 9.6L2 14" stroke="#e6e6e6" stroke-width="1.5" stroke-linecap="round"/></svg>
<span style="left:22.00px;top:856.95px;line-height:16px;font-size:12px;color:#707070;letter-spacing:-0.505px;">Search</span>
<div style="left:170px;top:855.5px;width:22px;height:18px;background:#545454;border-radius:0px 4px 4px 0px;"></div>
<svg style="left:173px;top:856.5px;" width="16" height="16" viewBox="0 0 16 16"><path d="M2 8H14M4.5 5L1.8 8L4.5 11M11.5 5L14.2 8L11.5 11" fill="none" stroke="#e6e6e6" stroke-width="1.2" stroke-linecap="round" stroke-linejoin="round"/></svg>
<div style="left:477px;top:865px;width:2.2px;height:84px;background:#4772b3;"></div>
<div style="left:466px;top:856.5px;width:23.5px;height:16.5px;background:#4772b3;border-radius:4px;"></div>
<span style="left:474.16px;top:857.45px;line-height:16px;font-size:12px;color:#ffffff;">0</span>
<div style="left:203.5px;top:938.7px;width:185.5px;height:7.5px;background:#545454;border-radius:3.8px;"></div>
<svg style="left:203.5px;top:939.5px;" width="6" height="6" viewBox="0 0 6 6"><circle cx="3" cy="3" r="2.6" fill="#2a2a2a"/></svg>
<svg style="left:383px;top:939.5px;" width="6" height="6" viewBox="0 0 6 6"><circle cx="3" cy="3" r="2.6" fill="#2a2a2a"/></svg>
<div style="left:1292.5px;top:878px;width:3px;height:54px;background:#4a4a4a;border-radius:1.5px;"></div>
<div style="left:0px;top:828px;width:1517px;height:25px;background:#303030;"></div>
<div style="left:3px;top:832px;width:30.5px;height:18px;background:#282828;border-radius:4px;border:1px solid #3d3d3d;"></div>
<svg style="left:6.5px;top:833px;" width="16" height="16" viewBox="0 0 16 16"><rect x="4.6" y="1.6" width="6.8" height="4.8" fill="#8e8e8e"/><path d="M2.4 1.4L5 4L2.4 6.6L-0.2 4ZM13.6 1.4L16.2 4L13.6 6.6L11 4Z" fill="#e6e6e6"/><path d="M7.8 8.6L11.1 11.9L7.8 15.2L4.5 11.9Z" fill="none" stroke="#e6e6e6" stroke-width="0.95"/></svg>
<svg style="left:23.55px;top:838.975px;" width="7.9" height="5.05" viewBox="0 0 7.9 5.05"><path d="M1 1 L3.95 4.05 L6.9 1" fill="none" stroke="#e6e6e6" stroke-width="1.3" stroke-linecap="round" stroke-linejoin="round"/></svg>
<div style="left:39.5px;top:832px;width:129px;height:18px;background:#282828;border-radius:4px;border:1px solid #3d3d3d;"></div>
<svg style="left:43px;top:833px;" width="16" height="16" viewBox="0 0 16 16"><rect x="4.5" y="4.5" width="7" height="7" fill="#e6e6e6"/><path d="M1.5 4.5V1.5H4.5M11.5 1.5H14.5V4.5M14.5 11.5V14.5H11.5M4.5 14.5H1.5V11.5" fill="none" stroke="#e6e6e6" stroke-width="1.1"/></svg>
<span style="left:65.00px;top:833.45px;line-height:16px;font-size:12px;color:#e6e6e6;letter-spacing:0.150px;">Action Editor</span>
<svg style="left:158.05px;top:838.975px;" width="7.9" height="5.05" viewBox="0 0 7.9 5.05"><path d="M1 1 L3.95 4.05 L6.9 1" fill="none" stroke="#e6e6e6" stroke-width="1.3" stroke-linecap="round" stroke-linejoin="round"/></svg>
<span style="left:181.00px;top:833.45px;line-height:16px;font-size:12px;color:#e6e6e6;letter-spacing:0.051px;">View</span>
<span style="left:222.00px;top:833.45px;line-height:16px;font-size:12px;color:#e6e6e6;letter-spacing:-0.310px;">Select</span>
<span style="left:269.00px;top:833.45px;line-height:16px;font-size:12px;color:#e6e6e6;letter-spacing:-0.224px;">Marker</span>
<span style="left:320.00px;top:833.45px;line-height:16px;font-size:12px;color:#e6e6e6;letter-spacing:-0.100px;">Channel</span>
<span style="left:379.00px;top:833.45px;line-height:16px;font-size:12px;color:#e6e6e6;letter-spacing:-0.562px;">Key</span>
<span style="left:413.00px;top:833.45px;line-height:16px;font-size:12px;color:#e6e6e6;letter-spacing:0.190px;">Action</span>
<div style="left:532.5px;top:832px;width:237px;height:18px;background:#282828;border-radius:4px;border:1px solid #3d3d3d;"></div>
<svg style="left:535.5px;top:833px;" width="16" height="16" viewBox="0 0 16 16"><rect x="4.6" y="1.6" width="6.8" height="4.8" fill="#8e8e8e"/><path d="M2.4 1.4L5 4L2.4 6.6L-0.2 4ZM13.6 1.4L16.2 4L13.6 6.6L11 4Z" fill="#e6e6e6"/><path d="M7.8 8.6L11.1 11.9L7.8 15.2L4.5 11.9Z" fill="none" stroke="#e6e6e6" stroke-width="0.95"/></svg>
<svg style="left:553.05px;top:838.975px;" width="7.9" height="5.05" viewBox="0 0 7.9 5.05"><path d="M1 1 L3.95 4.05 L6.9 1" fill="none" stroke="#e6e6e6" stroke-width="1.3" stroke-linecap="round" stroke-linejoin="round"/></svg>
<div style="left:563.5px;top:832.5px;width:121.5px;height:17px;background:#1d1d1d;"></div>
<span style="left:571.00px;top:833.45px;line-height:16px;font-size:12px;color:#e6e6e6;letter-spacing:-0.150px;">StartingPose_Avatar</span>
<div style="left:685.5px;top:832.5px;width:23.5px;height:17px;background:#545454;"></div>
<span style="left:694.16px;top:833.45px;line-height:16px;font-size:12px;color:#e6e6e6;">2</span>
<div style="left:710px;top:832.5px;width:19px;height:17px;background:#4772b3;"></div>
<svg style="left:711.5px;top:833px;" width="16" height="16" viewBox="0 0 16 16"><path d="M8 1.5L14 3.5V8Q14 12.5 8 14.8Q2 12.5 2 8V3.5Z" fill="#fff"/><path d="M5 8L7.3 10.3L11.2 5.8" fill="none" stroke="#4772b3" stroke-width="1.5"/></svg>
<div style="left:729.8px;top:832.5px;width:19.7px;height:17px;background:#545454;"></div>
<svg style="left:731.5px;top:833px;" width="16" height="16" viewBox="0 0 16 16"><g fill="none" stroke="#e6e6e6" stroke-width="1.1"><rect x="2" y="5" width="8" height="9"/><path d="M5.5 5V2H11L14 5V11H10M11 2V5H14"/></g></svg>
<div style="left:750.3px;top:832.5px;width:18.7px;height:17px;background:#545454;border-radius:0px 3px 3px 0px;"></div>
<svg style="left:751.5px;top:833px;" width="16" height="16" viewBox="0 0 16 16"><path d="M4 4L12 12M12 4L4 12" stroke="#e6e6e6" stroke-width="1.2" stroke-linecap="round"/></svg>
<div style="left:779px;top:832px;width:178.5px;height:18px;background:#282828;border-radius:4px;border:1px solid #3d3d3d;"></div>
<svg style="left:782px;top:833px;" width="16" height="16" viewBox="0 0 16 16"><rect x="4.6" y="1.6" width="6.8" height="4.8" fill="#8e8e8e"/><path d="M2.4 1.4L5 4L2.4 6.6L-0.2 4ZM13.6 1.4L16.2 4L13.6 6.6L11 4Z" fill="#e6e6e6"/><path d="M3.2 8V13H6" fill="none" stroke="#e6e6e6" stroke-width="1"/><rect x="8" y="10.8" width="6.6" height="3.4" fill="#e6e6e6"/></svg>
<svg style="left:799.05px;top:838.975px;" width="7.9" height="5.05" viewBox="0 0 7.9 5.05"><path d="M1 1 L3.95 4.05 L6.9 1" fill="none" stroke="#e6e6e6" stroke-width="1.3" stroke-linecap="round" stroke-linejoin="round"/></svg>
<div style="left:809.5px;top:832.5px;width:108.5px;height:17px;background:#1d1d1d;"></div>
<span style="left:817.00px;top:833.45px;line-height:16px;font-size:12px;color:#e6e6e6;letter-spacing:-0.094px;">Avatar_Animation</span>
<div style="left:918.8px;top:832.5px;width:19.7px;height:17px;background:#545454;"></div>
<svg style="left:920.5px;top:833px;" width="16" height="16" viewBox="0 0 16 16"><g fill="none" stroke="#e6e6e6" stroke-width="1.1"><rect x="2" y="5" width="8" height="9"/><path d="M5.5 5V2H11L14 5V11H10M11 2V5H14"/></g></svg>
<div style="left:939.3px;top:832.5px;width:18.2px;height:17px;background:#545454;border-radius:0px 3px 3px 0px;"></div>
<svg style="left:940.5px;top:833px;" width="16" height="16" viewBox="0 0 16 16"><path d="M4 4L12 12M12 4L4 12" stroke="#e6e6e6" stroke-width="1.2" stroke-linecap="round"/></svg>
<div style="left:1292px;top:832px;width:78.5px;height:17.5px;background:#545454;border-radius:4px;"></div>
<div style="left:1311px;top:832px;width:39px;height:17.5px;background:#4772b3;"></div>
<div style="left:1330.3px;top:832px;width:0.8px;height:17.5px;background:#3a5e96;"></div>
<svg style="left:1293.5px;top:832.7px;" width="16" height="16" viewBox="0 0 16 16"><rect x="4.6" y="1.6" width="6.8" height="4.8" fill="#8e8e8e"/><path d="M2.4 1.4L5 4L2.4 6.6L-0.2 4ZM13.6 1.4L16.2 4L13.6 6.6L11 4Z" fill="#e6e6e6"/><path d="M3.2 8V13H6" fill="none" stroke="#e6e6e6" stroke-width="1"/><rect x="8" y="10.8" width="6.6" height="3.4" fill="#e6e6e6"/></svg>
<svg style="left:1312.5px;top:832.7px;" width="16" height="16" viewBox="0 0 16 16"><path d="M3.5 2L12.5 8L8.3 8.8L6.3 13Z" fill="#fff"/></svg>
<svg style="left:1332.5px;top:832.7px;" width="16" height="16" viewBox="0 0 16 16"><rect x="4.8" y="4.8" width="6.4" height="6.4" fill="none" stroke="#fff" stroke-width="1" stroke-dasharray="1.6 1"/><path d="M1.5 4.5V1.5H4.5M11.5 1.5H14.5V4.5M14.5 11.5V14.5H11.5M4.5 14.5H1.5V11.5" fill="none" stroke="#fff" stroke-width="1.2"/></svg>
<svg style="left:1352.5px;top:832.7px;" width="16" height="16" viewBox="0 0 16 16"><path d="M8 1.5L15 14H1Z" fill="#f0f0f0"/><path d="M8 5.5V10" stroke="#545454" stroke-width="1.7"/><circle cx="8" cy="12" r="0.95" fill="#545454"/></svg>
<div style="left:1376.5px;top:832px;width:30.5px;height:17.5px;background:#282828;border-radius:4px;border:1px solid #3d3d3d;"></div>
<svg style="left:1379.5px;top:832.7px;" width="16" height="16" viewBox="0 0 16 16"><path d="M2.5 2.5H13.5L9.3 8V14L6.7 12.5V8Z" fill="none" stroke="#e6e6e6" stroke-width="1.2" stroke-linejoin="round"/></svg>
<svg style="left:1396.55px;top:838.975px;" width="7.9" height="5.05" viewBox="0 0 7.9 5.05"><path d="M1 1 L3.95 4.05 L6.9 1" fill="none" stroke="#e6e6e6" stroke-width="1.3" stroke-linecap="round" stroke-linejoin="round"/></svg>
<div style="left:1413.5px;top:832px;width:18.5px;height:17.5px;background:#4772b3;border-radius:4px 0px 0px 4px;"></div>
<svg style="left:1414.7px;top:832.7px;" width="16" height="16" viewBox="0 0 16 16"><path d="M4.2 11.8A5.2 5.2 0 1 1 12 11.2L9.8 9.2A2.3 2.3 0 1 0 6.4 9.6Z" fill="#fff"/><path d="M1.5 14.5H4V12.5H6.5" fill="none" stroke="#fff" stroke-width="1"/></svg>
<div style="left:1432.5px;top:832px;width:19.5px;height:17.5px;background:#282828;border-radius:0px 4px 4px 0px;"></div>
<svg style="left:1438.05px;top:838.975px;" width="7.9" height="5.05" viewBox="0 0 7.9 5.05"><path d="M1 1 L3.95 4.05 L6.9 1" fill="none" stroke="#e6e6e6" stroke-width="1.3" stroke-linecap="round" stroke-linejoin="round"/></svg>
<div style="left:1459px;top:832px;width:18px;height:17.5px;background:#545454;border-radius:4px 0px 0px 4px;"></div>
<svg style="left:1460px;top:832.7px;" width="16" height="16" viewBox="0 0 16 16"><circle cx="8" cy="8" r="5.5" fill="none" stroke="#b0b0b0" stroke-width="1"/><circle cx="8" cy="8" r="1.8" fill="#e0e0e0"/></svg>
<div style="left:1477.5px;top:832px;width:31px;height:17.5px;background:#2b2b2b;border-radius:0px 4px 4px 0px;border:1px solid #3a3a3a;border-left:none;"></div>
<svg style="left:1480px;top:832.7px;" width="16" height="16" viewBox="0 0 16 16"><path d="M1.5 13.5C6 13.5 6 3 8 3C10 3 10 13.5 14.5 13.5" fill="none" stroke="#5a5a5a" stroke-width="1.1"/></svg>
<svg style="left:1498.55px;top:838.975px;" width="7.9" height="5.05" viewBox="0 0 7.9 5.05"><path d="M1 1 L3.95 4.05 L6.9 1" fill="none" stroke="#5a5a5a" stroke-width="1.3" stroke-linecap="round" stroke-linejoin="round"/></svg>
<div style="left:1298px;top:853px;width:219px;height:96px;background:#303030;"></div>
<div style="left:1306.5px;top:855.5px;width:203px;height:100px;background:#3d3d3d;border-radius:5px 5px 0px 0px;"></div>
<svg style="left:1314px;top:865.25px;" width="11" height="6.5" viewBox="0 0 11 6.5"><path d="M1 1 L5.5 5.5 L10 1" fill="none" stroke="#e6e6e6" stroke-width="1.3" stroke-linecap="round" stroke-linejoin="round"/></svg>
<span style="left:1328.50px;top:860.45px;line-height:16px;font-size:12px;color:#e6e6e6;letter-spacing:0.190px;">Action</span>
<svg style="left:1492px;top:865.5px;" width="12" height="6" viewBox="0 0 12 6"><rect x="0" y="0" width="1.4" height="1.4" fill="#8c8c8c"/><rect x="0" y="3.4" width="1.4" height="1.4" fill="#8c8c8c"/><rect x="3" y="0" width="1.4" height="1.4" fill="#8c8c8c"/><rect x="3" y="3.4" width="1.4" height="1.4" fill="#8c8c8c"/><rect x="6" y="0" width="1.4" height="1.4" fill="#8c8c8c"/><rect x="6" y="3.4" width="1.4" height="1.4" fill="#8c8c8c"/><rect x="9" y="0" width="1.4" height="1.4" fill="#8c8c8c"/><rect x="9" y="3.4" width="1.4" height="1.4" fill="#8c8c8c"/></svg>
<svg style="left:1316px;top:890px;" width="16" height="16" viewBox="0 0 16 16"><rect x="4.6" y="1.6" width="6.8" height="4.8" fill="#8e8e8e"/><path d="M2.4 1.4L5 4L2.4 6.6L-0.2 4ZM13.6 1.4L16.2 4L13.6 6.6L11 4Z" fill="#e0e0e0"/><path d="M7.8 8.6L11.1 11.9L7.8 15.2L4.5 11.9Z" fill="none" stroke="#e0e0e0" stroke-width="0.95"/></svg>
<span style="left:1340.00px;top:890.45px;line-height:16px;font-size:12px;color:#d8d8d8;letter-spacing:-0.150px;">StartingPose_Avatar</span>
<div style="left:1315px;top:917px;width:12px;height:12px;background:#545454;border-radius:2.5px;"></div>
<span style="left:1331.50px;top:915.45px;line-height:16px;font-size:12px;color:#e6e6e6;letter-spacing:-0.309px;">Manual Frame Range</span>
<div style="left:1315px;top:939px;width:92.5px;height:18px;background:#464646;border-radius:4px 0px 0px 4px;"></div>
<div style="left:1408.3px;top:939px;width:92.7px;height:18px;background:#464646;border-radius:0px 4px 4px 0px;"></div>
<span style="left:1330.00px;top:940.45px;line-height:16px;font-size:12px;color:#8e8e8e;">Start</span>
<span style="left:1366.97px;top:940.45px;line-height:16px;font-size:12px;color:#8e8e8e;">0.000</span>
<span style="left:1424.00px;top:940.45px;line-height:16px;font-size:12px;color:#8e8e8e;">End</span>
<span style="left:1460.97px;top:940.45px;line-height:16px;font-size:12px;color:#8e8e8e;">0.000</span>
<div style="left:1511.5px;top:857px;width:3px;height:29px;background:#484848;border-radius:1.5px;"></div>
</div></div>
<div style="left:0px;top:952px;width:1517px;height:24px;background:#303030;border-radius:0px 5px 5px 0px;"></div>
<div style="left:2.5px;top:955.5px;width:31px;height:18.8px;background:#282828;border-radius:4px;border:1px solid #3d3d3d;"></div>
<svg style="left:6px;top:957px;" width="16" height="16" viewBox="0 0 16 16"><circle cx="8" cy="8" r="7" fill="#e6e6e6"/><path d="M11.4 3.8L7.4 8L10.6 11.6" stroke="#282828" stroke-width="1.9" fill="none" stroke-linejoin="miter"/></svg>
<svg style="left:23.55px;top:962.975px;" width="7.9" height="5.05" viewBox="0 0 7.9 5.05"><path d="M1 1 L3.95 4.05 L6.9 1" fill="none" stroke="#e6e6e6" stroke-width="1.3" stroke-linecap="round" stroke-linejoin="round"/></svg>
<div style="left:39.5px;top:956px;width:132px;height:18px;background:#282828;border-radius:4px;border:1px solid #3d3d3d;"></div>
<div style="left:109.5px;top:956px;width:1px;height:18px;background:#3d3d3d;"></div>
<span style="left:47.30px;top:957.45px;line-height:16px;font-size:12px;color:#e6e6e6;letter-spacing:-0.213px;">Playback</span>
<svg style="left:100.05px;top:962.975px;" width="7.9" height="5.05" viewBox="0 0 7.9 5.05"><path d="M1 1 L3.95 4.05 L6.9 1" fill="none" stroke="#e6e6e6" stroke-width="1.3" stroke-linecap="round" stroke-linejoin="round"/></svg>
<span style="left:118.00px;top:957.45px;line-height:16px;font-size:12px;color:#e6e6e6;letter-spacing:-0.201px;">Keying</span>
<svg style="left:161.05px;top:962.975px;" width="7.9" height="5.05" viewBox="0 0 7.9 5.05"><path d="M1 1 L3.95 4.05 L6.9 1" fill="none" stroke="#e6e6e6" stroke-width="1.3" stroke-linecap="round" stroke-linejoin="round"/></svg>
<span style="left:181.00px;top:957.45px;line-height:16px;font-size:12px;color:#e6e6e6;letter-spacing:0.051px;">View</span>
<span style="left:222.00px;top:957.45px;line-height:16px;font-size:12px;color:#e6e6e6;letter-spacing:-0.224px;">Marker</span>
<div style="left:664.5px;top:956px;width:17.5px;height:18px;background:#4772b3;border-radius:4px 0px 0px 4px;"></div>
<svg style="left:665.2px;top:957px;" width="16" height="16" viewBox="0 0 16 16"><circle cx="8" cy="8" r="4.3" fill="#d03434" stroke="#f0d0d0" stroke-width="0.8"/></svg>
<div style="left:682.5px;top:956px;width:19.5px;height:18px;background:#282828;border-radius:0px 4px 4px 0px;border:1px solid #3d3d3d;border-left:none;"></div>
<svg style="left:688.05px;top:962.975px;" width="7.9" height="5.05" viewBox="0 0 7.9 5.05"><path d="M1 1 L3.95 4.05 L6.9 1" fill="none" stroke="#e6e6e6" stroke-width="1.3" stroke-linecap="round" stroke-linejoin="round"/></svg>
<div style="left:709px;top:956px;width:118px;height:18px;background:#545454;border-radius:4px;"></div>
<div style="left:728.3px;top:956px;width:0.8px;height:18px;background:#3e3e3e;"></div>
<div style="left:748px;top:956px;width:0.8px;height:18px;background:#3e3e3e;"></div>
<div style="left:767.7px;top:956px;width:0.8px;height:18px;background:#3e3e3e;"></div>
<div style="left:787.4px;top:956px;width:0.8px;height:18px;background:#3e3e3e;"></div>
<div style="left:807.1px;top:956px;width:0.8px;height:18px;background:#3e3e3e;"></div>
<svg style="left:710.8px;top:957px;" width="16" height="16" viewBox="0 0 16 16"><path d="M4 3.5V12.5" stroke="#f0f0f0" stroke-width="1.6"/><path d="M12.5 3.5V12.5L5.5 8Z" fill="#f0f0f0"/></svg>
<svg style="left:730.5px;top:957px;" width="16" height="16" viewBox="0 0 16 16"><path d="M5 4L8.6 8L5 12L1.4 8Z" fill="#f0f0f0"/><path d="M14.5 3.8V12.2L9.5 8Z" fill="#f0f0f0"/></svg>
<svg style="left:750.2px;top:957px;" width="16" height="16" viewBox="0 0 16 16"><path d="M12.5 3V13L3.5 8Z" fill="#f0f0f0"/></svg>
<svg style="left:769.9px;top:957px;" width="16" height="16" viewBox="0 0 16 16"><path d="M3.5 3V13L12.5 8Z" fill="#f0f0f0"/></svg>
<svg style="left:789.6px;top:957px;" width="16" height="16" viewBox="0 0 16 16"><path d="M11 4L14.6 8L11 12L7.4 8Z" fill="#f0f0f0"/><path d="M1.5 3.8V12.2L6.5 8Z" fill="#f0f0f0"/></svg>
<svg style="left:809.3px;top:957px;" width="16" height="16" viewBox="0 0 16 16"><path d="M12 3.5V12.5" stroke="#f0f0f0" stroke-width="1.6"/><path d="M3.5 3.5V12.5L10.5 8Z" fill="#f0f0f0"/></svg>
<div style="left:1236.5px;top:956px;width:73.5px;height:18px;background:#545454;border-radius:4px;"></div>
<span style="left:1269.16px;top:957.45px;line-height:16px;font-size:12px;color:#e6e6e6;">0</span>
<div style="left:1316.5px;top:956px;width:193px;height:18px;background:#545454;border-radius:4px;"></div>
<div style="left:1335.6px;top:956px;width:0.8px;height:18px;background:#3e3e3e;"></div>
<div style="left:1423.6px;top:956px;width:0.8px;height:18px;background:#3e3e3e;"></div>
<svg style="left:1318px;top:957px;" width="16" height="16" viewBox="0 0 16 16"><circle cx="8" cy="9" r="5" fill="none" stroke="#e6e6e6" stroke-width="1.1"/><path d="M8 6V9L10 10M6.5 2.3H9.5M8 2.3V4M12 4.3L13 5.3" fill="none" stroke="#e6e6e6" stroke-width="1.1"/></svg>
<span style="left:1351.00px;top:957.45px;line-height:16px;font-size:12px;color:#e6e6e6;letter-spacing:-0.069px;">Start</span>
<span style="left:1404.31px;top:957.45px;line-height:16px;font-size:12px;color:#e6e6e6;">0</span>
<span style="left:1440.00px;top:957.45px;line-height:16px;font-size:12px;color:#e6e6e6;letter-spacing:-0.286px;">End</span>
<span style="left:1476.47px;top:957.45px;line-height:16px;font-size:12px;color:#e6e6e6;">299</span>
<div style="left:-2px;top:17px;width:1519px;height:668px;border-radius:0px 5px 5px 0px;box-shadow:inset 0 0 0 1px rgba(255,255,255,0.10);pointer-events:none;"></div>
<div style="left:1520px;top:17px;width:395px;height:291.7px;border-radius:5px 0px 0px 5px;box-shadow:inset 0 0 0 1px rgba(255,255,255,0.07);pointer-events:none;"></div>
<div style="left:1520px;top:313px;width:395px;height:662.5px;border-radius:5px 0px 0px 5px;box-shadow:inset 0 0 0 1px rgba(255,255,255,0.07);pointer-events:none;"></div>
<div style="left:-2px;top:688px;width:1519px;height:137px;border-radius:0px 5px 5px 0px;box-shadow:inset 0 0 0 1px rgba(255,255,255,0.07);pointer-events:none;"></div>
<div style="left:-2px;top:828px;width:1519px;height:120.5px;border-radius:0px 5px 5px 0px;box-shadow:inset 0 0 0 1px rgba(255,255,255,0.07);pointer-events:none;"></div>
<div style="left:-2px;top:952px;width:1519px;height:24px;border-radius:0px 5px 5px 0px;box-shadow:inset 0 0 0 1px rgba(255,255,255,0.07);pointer-events:none;"></div>
</div></body></html>
